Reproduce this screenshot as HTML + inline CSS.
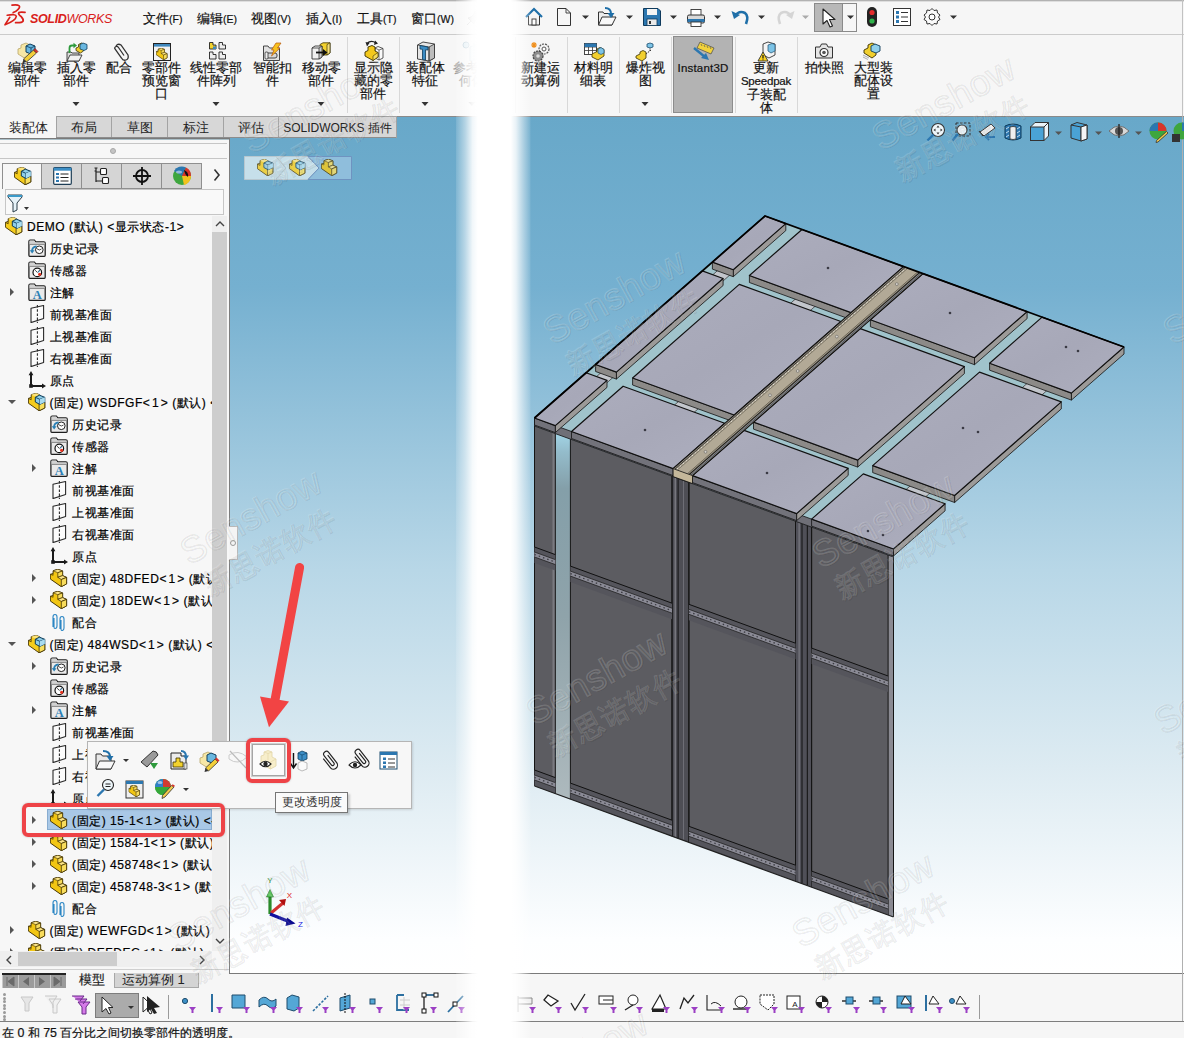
<!DOCTYPE html><html><head><meta charset="utf-8"><style>
*{margin:0;padding:0;box-sizing:border-box}
html,body{width:1184px;height:1038px;overflow:hidden;background:#f6f6f6;font-family:"Liberation Sans",sans-serif;color:#1a1a1a}
.a{position:absolute}
.t{position:absolute;white-space:nowrap;font-size:12px;line-height:14px;-webkit-text-stroke:0.2px currentColor}
.rb{position:absolute;white-space:nowrap;font-size:13px;line-height:13px;text-align:center;width:80px;color:#111;-webkit-text-stroke:0.2px currentColor}
svg{position:absolute;overflow:visible}
.tab{position:absolute;top:116px;height:22px;white-space:nowrap;background:#d7d7d7;border:1px solid #a3a3a3;border-bottom:none;font-size:13px;line-height:21px;text-align:center;color:#222}
</style></head><body>
<svg width="0" height="0" style="position:absolute"><defs>
<symbol id="asm" viewBox="0 0 18 18">
<path d="M0.4 5.4 L3.2 4.4 L3.2 1.7 L8.1 0.3 L11.8 1.9 L11.8 9 L16.8 9 L16.8 15 L11.1 17.8 L0.4 10.2Z" fill="#f5cc1c" stroke="#3d2e00" stroke-width="0.9" stroke-linejoin="round"/>
<path d="M3.2 1.7 L8.1 0.3 L11.8 1.9 L7 3.4Z" fill="#fbe27a"/>
<path d="M11.1 11 L16.8 9 L16.8 15 L11.1 17.8Z" fill="#f9df5c" stroke="#3d2e00" stroke-width="0.8"/>
<path d="M0.4 5.4 L3.2 6.8 L3.2 4.4" fill="none" stroke="#3d2e00" stroke-width="0.7"/>
<path d="M7.3 4.3 L11.4 2.2 L16.8 4.3 L16.8 9 L11.8 11.4 L7.3 9Z" fill="#8fcfea" stroke="#0b3a58" stroke-width="1"/>
<path d="M7.3 4.3 L11.8 6.3 L16.8 4.3 M11.8 6.3 L11.8 11.4" fill="none" stroke="#0b3a58" stroke-width="0.9"/>
<path d="M11.8 6.3 L16.8 4.3 L16.8 9 L11.8 11.4Z" fill="#a9dcf0"/>
</symbol>
<symbol id="part" viewBox="0 0 18 18">
<path d="M0.3 5.3 L3.1 4.6 L3.1 1.8 L7.9 0.2 L12.6 2 L12.6 6.6 L16.6 8.4 L16.6 14.9 L11.3 17.7 L0.3 10Z" fill="#f2c613" stroke="#3d2e00" stroke-width="0.95" stroke-linejoin="round"/>
<path d="M3.1 1.8 L7.9 0.2 L12.6 2 L7.8 3.7Z" fill="#fbe487" stroke="#3d2e00" stroke-width="0.6"/>
<path d="M7.8 3.7 L12.6 2 L12.6 6.6 L7.8 8.3Z" fill="#f8dc5c" stroke="#3d2e00" stroke-width="0.7"/>
<path d="M7.8 8.3 L12.6 6.6 L16.6 8.4 L11.3 10.5Z" fill="#fbe487" stroke="#3d2e00" stroke-width="0.7"/>
<path d="M11.3 10.5 L16.6 8.4 L16.6 14.9 L11.3 17.7Z" fill="#f8dc5c" stroke="#3d2e00" stroke-width="0.8"/>
<path d="M0.3 5.3 L3.1 6.3 L3.1 4.6" fill="none" stroke="#3d2e00" stroke-width="0.6"/>
</symbol>
<symbol id="fold" viewBox="0 0 18 18">
<path d="M0.9 2.4 Q0.9 1 2.2 1 L6.4 1 L7.8 2.8 L15.9 2.8 Q17.2 2.8 17.2 4.1 L17.2 16.2 Q17.2 17.4 15.9 17.4 L2.2 17.4 Q0.9 17.4 0.9 16.2Z" fill="#eaeaea" stroke="#1e1e1e" stroke-width="1.25"/>
<path d="M1.5 1.6 L6.2 1.6 L7.5 3.4 L16.6 3.4 L16.6 5.2 L1.5 5.2Z" fill="#d2d2d2"/>
<path d="M1.5 5.4 L16.6 5.4" stroke="#7a7a7a" stroke-width="0.9"/>
</symbol>
<symbol id="hist" viewBox="0 0 18 18"><use href="#fold"/>
<circle cx="11.3" cy="10.8" r="3.8" fill="#fff" stroke="#222" stroke-width="1"/><path d="M8.5 9.5 L11.3 11 L13.5 10" stroke="#222" stroke-width="0.8" fill="none"/>
<path d="M4 12.5 Q4 7.8 8.6 7.4" stroke="#2a80b5" stroke-width="1.8" fill="none"/><path d="M1.8 11.3 L4.1 14.6 L6.6 11.3Z" fill="#2a80b5"/>
</symbol>
<symbol id="sens" viewBox="0 0 18 18"><use href="#fold"/>
<circle cx="9.3" cy="11.4" r="4.3" fill="#fff" stroke="#111" stroke-width="1.2"/><path d="M7.2 9.3 L9.3 11.4 M12 8.8 L9.6 11.2" stroke="#222" stroke-width="0.9"/><path d="M12.2 9.4 L10 11.3" stroke="#2a80b5" stroke-width="1"/><circle cx="11.6" cy="13.3" r="1.6" fill="#e8321e"/>
</symbol>
<symbol id="annot" viewBox="0 0 18 18"><use href="#fold"/>
<text x="9.2" y="16.3" font-family="Liberation Serif" font-weight="bold" font-size="12.5" fill="#2a7fb5" text-anchor="middle">A</text>
</symbol>
<symbol id="plane" viewBox="0 0 18 18">
<path d="M3 3.3 L15.6 0.5 L15.6 13.6 L3 17.6 Z" fill="#fbfbfb" stroke="#2a2a2a" stroke-width="1.1" stroke-linejoin="round"/>
<path d="M9.4 0 L9.4 18" stroke="#2a2a2a" stroke-width="1.1" stroke-dasharray="2.6 1.6"/>
</symbol>
<symbol id="origin" viewBox="0 0 18 18">
<path d="M3 3 L3 15 L15 15" stroke="#1a1a1a" stroke-width="2" fill="none"/><path d="M0.6 4.2 L3 0 L5.4 4.2Z M14 12.4 L18 15 L14 17.6Z" fill="#1a1a1a"/><rect x="1.2" y="13.2" width="3.6" height="3.6" fill="#1a1a1a"/>
</symbol>
<symbol id="mate" viewBox="0 0 18 18">
<path d="M3 14 L3 4 Q3 1.5 5 1.5 Q7 1.5 7 4 L7 13 Q7 15.5 5 15.5 Q4 15.5 4 14 L4 5" fill="none" stroke="#2b86c4" stroke-width="1.1"/>
<path d="M10 16 L10 6 Q10 3.5 12 3.5 Q14 3.5 14 6 L14 15 Q14 17.5 12 17.5 Q11 17.5 11 16 L11 7" fill="none" stroke="#2b86c4" stroke-width="1.1"/>
</symbol>
<symbol id="tri_r" viewBox="0 0 8 8"><path d="M2 0 L6 4 L2 8Z" fill="#555"/></symbol>
<symbol id="tri_d" viewBox="0 0 8 8"><path d="M0 2 L8 2 L4 6Z" fill="#555"/></symbol>
<symbol id="dd" viewBox="0 0 8 8"><path d="M0.5 2.5 L7.5 2.5 L4 6Z" fill="#333"/></symbol>
</defs></svg>
<div class="a" style="left:0;top:0;width:1184px;height:1px;background:#b2b2b2"></div><div class="a" style="left:0;top:1px;width:1184px;height:1px;background:#dedede"></div>
<div class="a" style="left:0;top:34px;width:1184px;height:1px;background:#cbcbcb"></div>
<div class="a" style="left:1182px;top:0;width:1px;height:116px;background:#c2c2c2"></div>
<div class="a" style="left:229px;top:116px;width:955px;height:857px;background:linear-gradient(#68a8c9 0%,#75b0d0 20%,#b8d7e7 53%,#ddebf2 76%,#fdfeff 96%,#ffffff 100%)"></div>
<div class="a" style="left:229px;top:116px;width:1px;height:857px;background:#7d7d7d"></div>
<div class="a" style="left:229px;top:116px;width:955px;height:1px;background:#8a8a8a"></div>
<div class="a" style="left:229px;top:973px;width:955px;height:1px;background:#7a7a7a"></div>
<div class="a" style="left:0;top:1021px;width:1184px;height:1px;background:#7e7e7e"></div>
<div class="a" style="left:1182px;top:116px;width:1px;height:905px;background:#b0b0b0"></div>
<div class="a" style="left:0;top:138px;width:229px;height:835px;background:#f7f7f7;border-top:1px solid #7a7a7a"></div><div class="a" style="left:0;top:139px;width:229px;height:1px;background:#a9bec6"></div>
<div class="a" style="left:0;top:143px;width:227px;height:1px;background:#c6c6c6"></div>
<div class="a" style="left:0;top:158px;width:227px;height:1px;background:#c6c6c6"></div>
<div class="a" style="left:110px;top:148px;width:6px;height:6px;border-radius:3px;background:#c4c4c4;border:1px solid #a8a8a8"></div>
<div class="a" style="left:41px;top:163px;width:41px;height:26px;background:#d5d5d5;border:1px solid #8f8f8f"></div>
<div class="a" style="left:81px;top:163px;width:41px;height:26px;background:#d5d5d5;border:1px solid #8f8f8f"></div>
<div class="a" style="left:121px;top:163px;width:41px;height:26px;background:#d5d5d5;border:1px solid #8f8f8f"></div>
<div class="a" style="left:161px;top:163px;width:41px;height:26px;background:#d5d5d5;border:1px solid #8f8f8f"></div>
<div class="a" style="left:2px;top:163px;width:40px;height:26px;border-top:1px solid #8f8f8f;border-left:1px solid #8f8f8f"></div>
<div class="a" style="left:5px;top:189px;width:219px;height:26px;background:#f9f9f9;border:1px solid #c6c6c6"></div>
<svg class="a" style="left:14px;top:167px" width="18" height="18" viewBox="0 0 18 18" ><use href="#asm" width="18" height="18"/></svg>
<svg class="a" style="left:53px;top:167px" width="19" height="18" viewBox="0 0 19 18"><rect x="0.7" y="0.7" width="17.6" height="16.6" rx="1" fill="#fff" stroke="#1d3d55" stroke-width="1.2"/><rect x="0.7" y="0.7" width="17.6" height="3" fill="#3d8fc6"/>
<rect x="3" y="6" width="3" height="2" fill="#2c77b0"/><rect x="3" y="9.5" width="3" height="2" fill="#2c77b0"/><rect x="3" y="13" width="3" height="2" fill="#2c77b0"/><path d="M7.5 7 L15.5 7 M7.5 10.5 L15.5 10.5 M7.5 14 L15.5 14" stroke="#222" stroke-width="1"/></svg>
<svg class="a" style="left:94px;top:167px" width="16" height="18" viewBox="0 0 16 18"><path d="M2 1 L2 15 M2 5 L7 5 M2 14 L9 14" stroke="#222" stroke-width="1.2" fill="none"/><rect x="6.5" y="1.5" width="6" height="6" rx="1" fill="#fff" stroke="#222" stroke-width="1.1"/><rect x="8.5" y="10.5" width="6" height="6" rx="1" fill="#fff" stroke="#222" stroke-width="1.1"/><path d="M0.5 1 L3.5 1 M0.5 4 L2 4" stroke="#222"/></svg>
<svg class="a" style="left:132px;top:166px" width="20" height="20" viewBox="0 0 20 20"><circle cx="10" cy="10" r="6" fill="none" stroke="#111" stroke-width="1.8"/><path d="M10 1 L10 19 M1 10 L19 10" stroke="#111" stroke-width="1.8"/></svg>
<svg class="a" style="left:172px;top:166px" width="20" height="20" viewBox="0 0 20 20"><circle cx="10" cy="10" r="9" fill="#3ea63e"/><path d="M10 10 L2 5 A9 9 0 0 1 14 1.5Z" fill="#2c77b0"/><path d="M10 10 L14 1.5 A9 9 0 0 1 19 10Z" fill="#d9342b"/><path d="M10 10 L19 10 A9 9 0 0 1 12 19Z" fill="#f2c21c"/><path d="M12 4 Q17 6 16 11 Q13 9 12 4Z" fill="#111"/><ellipse cx="7" cy="6" rx="3" ry="1.6" fill="#fff" opacity="0.5"/></svg>
<svg class="a" style="left:213px;top:168px" width="8" height="14"><path d="M1.5 1.5 L6 7 L1.5 12.5" stroke="#333" stroke-width="1.6" fill="none"/></svg>
<svg class="a" style="left:7px;top:193px" width="26" height="20"><path d="M1 2 L15 2 L15 4 L10 10 L10 17 L6 19 L6 10 L1 4Z" fill="#e6f2f8" stroke="#2c3e4a" stroke-width="1"/><path d="M1 2 L15 2 L15 4 L1 4Z" fill="#3b9ac9"/><path d="M17 14 L22 14 L19.5 17Z" fill="#333"/></svg>
<div class="a" style="left:212px;top:216px;width:15px;height:735px;background:#efefef"></div>
<div class="a" style="left:212px;top:232px;width:15px;height:543px;background:#cdcdcd"></div>
<svg class="a" style="left:215px;top:220px" width="10" height="7"><path d="M1 6 L5 2 L9 6" stroke="#444" stroke-width="1.4" fill="none"/></svg>
<svg class="a" style="left:215px;top:938px" width="10" height="7"><path d="M1 1 L5 5 L9 1" stroke="#444" stroke-width="1.4" fill="none"/></svg>
<div class="a" style="left:0;top:951px;width:212px;height:16px;background:#efefef"></div>
<div class="a" style="left:18px;top:952px;width:99px;height:14px;background:#cdcdcd"></div>
<svg class="a" style="left:5px;top:955px" width="7" height="10"><path d="M6 1 L2 5 L6 9" stroke="#444" stroke-width="1.4" fill="none"/></svg>
<svg class="a" style="left:199px;top:955px" width="7" height="10"><path d="M1 1 L5 5 L1 9" stroke="#444" stroke-width="1.4" fill="none"/></svg>
<div class="a" style="left:0;top:969px;width:229px;height:1px;background:#cfcfcf"></div>
<div class="a" style="left:0;top:216px;width:212px;height:735px;overflow:hidden">
<svg class="a" style="left:5.0px;top:1px" width="18" height="18" viewBox="0 0 18 18" ><use href="#asm" width="18" height="18"/></svg>
<div class="t" style="left:27.0px;top:4px;letter-spacing:0.55px;color:#000">DEMO (默认) &lt;显示状态-1&gt;</div>
<svg class="a" style="left:27.5px;top:23px" width="18" height="18" viewBox="0 0 18 18" ><use href="#hist" width="18" height="18"/></svg>
<div class="t" style="left:49.5px;top:26px;letter-spacing:0.55px;color:#000">历史记录</div>
<svg class="a" style="left:27.5px;top:45px" width="18" height="18" viewBox="0 0 18 18" ><use href="#sens" width="18" height="18"/></svg>
<div class="t" style="left:49.5px;top:48px;letter-spacing:0.55px;color:#000">传感器</div>
<svg class="a" style="left:7.5px;top:72px" width="8" height="8" viewBox="0 0 8 8" ><use href="#tri_r" width="8" height="8"/></svg>
<svg class="a" style="left:27.5px;top:67px" width="18" height="18" viewBox="0 0 18 18" ><use href="#annot" width="18" height="18"/></svg>
<div class="t" style="left:49.5px;top:70px;letter-spacing:0.55px;color:#000">注解</div>
<svg class="a" style="left:27.5px;top:89px" width="18" height="18" viewBox="0 0 18 18" ><use href="#plane" width="18" height="18"/></svg>
<div class="t" style="left:49.5px;top:92px;letter-spacing:0.55px;color:#000">前视基准面</div>
<svg class="a" style="left:27.5px;top:111px" width="18" height="18" viewBox="0 0 18 18" ><use href="#plane" width="18" height="18"/></svg>
<div class="t" style="left:49.5px;top:114px;letter-spacing:0.55px;color:#000">上视基准面</div>
<svg class="a" style="left:27.5px;top:133px" width="18" height="18" viewBox="0 0 18 18" ><use href="#plane" width="18" height="18"/></svg>
<div class="t" style="left:49.5px;top:136px;letter-spacing:0.55px;color:#000">右视基准面</div>
<svg class="a" style="left:27.5px;top:155px" width="18" height="18" viewBox="0 0 18 18" ><use href="#origin" width="18" height="18"/></svg>
<div class="t" style="left:49.5px;top:158px;letter-spacing:0.55px;color:#000">原点</div>
<svg class="a" style="left:7.5px;top:182px" width="8" height="8" viewBox="0 0 8 8" ><use href="#tri_d" width="8" height="8"/></svg>
<svg class="a" style="left:27.5px;top:177px" width="18" height="18" viewBox="0 0 18 18" ><use href="#asm" width="18" height="18"/></svg>
<div class="t" style="left:49.5px;top:180px;letter-spacing:0.55px;color:#000">(固定) WSDFGF&lt;&#8202;1&#8202;&gt; (默认) &lt;显</div>
<svg class="a" style="left:50.0px;top:199px" width="18" height="18" viewBox="0 0 18 18" ><use href="#hist" width="18" height="18"/></svg>
<div class="t" style="left:72.0px;top:202px;letter-spacing:0.55px;color:#000">历史记录</div>
<svg class="a" style="left:50.0px;top:221px" width="18" height="18" viewBox="0 0 18 18" ><use href="#sens" width="18" height="18"/></svg>
<div class="t" style="left:72.0px;top:224px;letter-spacing:0.55px;color:#000">传感器</div>
<svg class="a" style="left:30.0px;top:248px" width="8" height="8" viewBox="0 0 8 8" ><use href="#tri_r" width="8" height="8"/></svg>
<svg class="a" style="left:50.0px;top:243px" width="18" height="18" viewBox="0 0 18 18" ><use href="#annot" width="18" height="18"/></svg>
<div class="t" style="left:72.0px;top:246px;letter-spacing:0.55px;color:#000">注解</div>
<svg class="a" style="left:50.0px;top:265px" width="18" height="18" viewBox="0 0 18 18" ><use href="#plane" width="18" height="18"/></svg>
<div class="t" style="left:72.0px;top:268px;letter-spacing:0.55px;color:#000">前视基准面</div>
<svg class="a" style="left:50.0px;top:287px" width="18" height="18" viewBox="0 0 18 18" ><use href="#plane" width="18" height="18"/></svg>
<div class="t" style="left:72.0px;top:290px;letter-spacing:0.55px;color:#000">上视基准面</div>
<svg class="a" style="left:50.0px;top:309px" width="18" height="18" viewBox="0 0 18 18" ><use href="#plane" width="18" height="18"/></svg>
<div class="t" style="left:72.0px;top:312px;letter-spacing:0.55px;color:#000">右视基准面</div>
<svg class="a" style="left:50.0px;top:331px" width="18" height="18" viewBox="0 0 18 18" ><use href="#origin" width="18" height="18"/></svg>
<div class="t" style="left:72.0px;top:334px;letter-spacing:0.55px;color:#000">原点</div>
<svg class="a" style="left:30.0px;top:358px" width="8" height="8" viewBox="0 0 8 8" ><use href="#tri_r" width="8" height="8"/></svg>
<svg class="a" style="left:50.0px;top:353px" width="18" height="18" viewBox="0 0 18 18" ><use href="#part" width="18" height="18"/></svg>
<div class="t" style="left:72.0px;top:356px;letter-spacing:0.55px;color:#000">(固定) 48DFED&lt;&#8202;1&#8202;&gt; (默认)</div>
<svg class="a" style="left:30.0px;top:380px" width="8" height="8" viewBox="0 0 8 8" ><use href="#tri_r" width="8" height="8"/></svg>
<svg class="a" style="left:50.0px;top:375px" width="18" height="18" viewBox="0 0 18 18" ><use href="#part" width="18" height="18"/></svg>
<div class="t" style="left:72.0px;top:378px;letter-spacing:0.55px;color:#000">(固定) 18DEW&lt;&#8202;1&#8202;&gt; (默认)</div>
<svg class="a" style="left:50.0px;top:397px" width="18" height="18" viewBox="0 0 18 18" ><use href="#mate" width="18" height="18"/></svg>
<div class="t" style="left:72.0px;top:400px;letter-spacing:0.55px;color:#000">配合</div>
<svg class="a" style="left:7.5px;top:424px" width="8" height="8" viewBox="0 0 8 8" ><use href="#tri_d" width="8" height="8"/></svg>
<svg class="a" style="left:27.5px;top:419px" width="18" height="18" viewBox="0 0 18 18" ><use href="#asm" width="18" height="18"/></svg>
<div class="t" style="left:49.5px;top:422px;letter-spacing:0.55px;color:#000">(固定) 484WSD&lt;&#8202;1&#8202;&gt; (默认) &lt;显</div>
<svg class="a" style="left:30.0px;top:446px" width="8" height="8" viewBox="0 0 8 8" ><use href="#tri_r" width="8" height="8"/></svg>
<svg class="a" style="left:50.0px;top:441px" width="18" height="18" viewBox="0 0 18 18" ><use href="#hist" width="18" height="18"/></svg>
<div class="t" style="left:72.0px;top:444px;letter-spacing:0.55px;color:#000">历史记录</div>
<svg class="a" style="left:50.0px;top:463px" width="18" height="18" viewBox="0 0 18 18" ><use href="#sens" width="18" height="18"/></svg>
<div class="t" style="left:72.0px;top:466px;letter-spacing:0.55px;color:#000">传感器</div>
<svg class="a" style="left:30.0px;top:490px" width="8" height="8" viewBox="0 0 8 8" ><use href="#tri_r" width="8" height="8"/></svg>
<svg class="a" style="left:50.0px;top:485px" width="18" height="18" viewBox="0 0 18 18" ><use href="#annot" width="18" height="18"/></svg>
<div class="t" style="left:72.0px;top:488px;letter-spacing:0.55px;color:#000">注解</div>
<svg class="a" style="left:50.0px;top:507px" width="18" height="18" viewBox="0 0 18 18" ><use href="#plane" width="18" height="18"/></svg>
<div class="t" style="left:72.0px;top:510px;letter-spacing:0.55px;color:#000">前视基准面</div>
<svg class="a" style="left:50.0px;top:529px" width="18" height="18" viewBox="0 0 18 18" ><use href="#plane" width="18" height="18"/></svg>
<div class="t" style="left:72.0px;top:532px;letter-spacing:0.55px;color:#000">上视基准面</div>
<svg class="a" style="left:50.0px;top:551px" width="18" height="18" viewBox="0 0 18 18" ><use href="#plane" width="18" height="18"/></svg>
<div class="t" style="left:72.0px;top:554px;letter-spacing:0.55px;color:#000">右视基准面</div>
<svg class="a" style="left:50.0px;top:573px" width="18" height="18" viewBox="0 0 18 18" ><use href="#origin" width="18" height="18"/></svg>
<div class="t" style="left:72.0px;top:576px;letter-spacing:0.55px;color:#000">原点</div>
<div class="a" style="left:47px;top:593px;width:165px;height:21px;background:#a9c8e6;border:1px solid #88acd0"></div>
<svg class="a" style="left:30.0px;top:600px" width="8" height="8" viewBox="0 0 8 8" ><use href="#tri_r" width="8" height="8"/></svg>
<svg class="a" style="left:50.0px;top:595px" width="18" height="18" viewBox="0 0 18 18" ><use href="#part" width="18" height="18"/></svg>
<div class="t" style="left:72.0px;top:598px;letter-spacing:0.55px;color:#000">(固定) 15-1&lt;&#8202;1&#8202;&gt; (默认) &lt;-</div>
<svg class="a" style="left:30.0px;top:622px" width="8" height="8" viewBox="0 0 8 8" ><use href="#tri_r" width="8" height="8"/></svg>
<svg class="a" style="left:50.0px;top:617px" width="18" height="18" viewBox="0 0 18 18" ><use href="#part" width="18" height="18"/></svg>
<div class="t" style="left:72.0px;top:620px;letter-spacing:0.55px;color:#000">(固定) 1584-1&lt;&#8202;1&#8202;&gt; (默认)</div>
<svg class="a" style="left:30.0px;top:644px" width="8" height="8" viewBox="0 0 8 8" ><use href="#tri_r" width="8" height="8"/></svg>
<svg class="a" style="left:50.0px;top:639px" width="18" height="18" viewBox="0 0 18 18" ><use href="#part" width="18" height="18"/></svg>
<div class="t" style="left:72.0px;top:642px;letter-spacing:0.55px;color:#000">(固定) 458748&lt;&#8202;1&#8202;&gt; (默认)</div>
<svg class="a" style="left:30.0px;top:666px" width="8" height="8" viewBox="0 0 8 8" ><use href="#tri_r" width="8" height="8"/></svg>
<svg class="a" style="left:50.0px;top:661px" width="18" height="18" viewBox="0 0 18 18" ><use href="#part" width="18" height="18"/></svg>
<div class="t" style="left:72.0px;top:664px;letter-spacing:0.55px;color:#000">(固定) 458748-3&lt;&#8202;1&#8202;&gt; (默认)</div>
<svg class="a" style="left:50.0px;top:683px" width="18" height="18" viewBox="0 0 18 18" ><use href="#mate" width="18" height="18"/></svg>
<div class="t" style="left:72.0px;top:686px;letter-spacing:0.55px;color:#000">配合</div>
<svg class="a" style="left:7.5px;top:710px" width="8" height="8" viewBox="0 0 8 8" ><use href="#tri_r" width="8" height="8"/></svg>
<svg class="a" style="left:27.5px;top:705px" width="18" height="18" viewBox="0 0 18 18" ><use href="#part" width="18" height="18"/></svg>
<div class="t" style="left:49.5px;top:708px;letter-spacing:0.55px;color:#000">(固定) WEWFGD&lt;&#8202;1&#8202;&gt; (默认) &lt;</div>
<svg class="a" style="left:7.5px;top:732px" width="8" height="8" viewBox="0 0 8 8" ><use href="#tri_r" width="8" height="8"/></svg>
<svg class="a" style="left:27.5px;top:727px" width="18" height="18" viewBox="0 0 18 18" ><use href="#part" width="18" height="18"/></svg>
<div class="t" style="left:49.5px;top:730px;letter-spacing:0.55px;color:#000">(固定) DEFDEG&lt;&#8202;1&#8202;&gt; (默认)</div>
</div>
<svg class="a" style="left:0;top:0" width="30" height="30" viewBox="0 0 30 30">
<path d="M12 5.2 Q19.5 4.3 19.6 6.8 Q19 9.8 13.2 12.6" stroke="#d9201a" stroke-width="1.7" fill="none" stroke-linecap="round"/>
<path d="M7.2 15.3 Q16 13.6 16.3 16.4 Q15.8 20.6 5 24.8 L9.8 17.3" stroke="#d9201a" stroke-width="1.6" fill="none" stroke-linejoin="round" stroke-linecap="round"/>
<path d="M25 12.4 Q20.5 11.6 18.9 12.6 Q17.6 14 21.4 16.8 Q23.8 19.2 23 21.3 Q22 22.9 15.6 22.7" stroke="#d9201a" stroke-width="1.8" fill="none" stroke-linecap="round"/>
</svg>
<div class="a" style="left:30px;top:12px;font-size:12.5px;line-height:14px;font-style:italic;color:#d9201a;letter-spacing:-0.35px;white-space:nowrap"><b style="font-weight:bold">SOLID</b><span style="font-weight:normal">WORKS</span></div>
<div class="t" style="left:143px;top:12px;font-size:12.5px;line-height:14px;color:#111">文件<span style="font-size:10.5px">(F)</span></div>
<div class="t" style="left:197px;top:12px;font-size:12.5px;line-height:14px;color:#111">编辑<span style="font-size:10.5px">(E)</span></div>
<div class="t" style="left:251px;top:12px;font-size:12.5px;line-height:14px;color:#111">视图<span style="font-size:10.5px">(V)</span></div>
<div class="t" style="left:306px;top:12px;font-size:12.5px;line-height:14px;color:#111">插入<span style="font-size:10.5px">(I)</span></div>
<div class="t" style="left:357px;top:12px;font-size:12.5px;line-height:14px;color:#111">工具<span style="font-size:10.5px">(T)</span></div>
<div class="t" style="left:411px;top:12px;font-size:12.5px;line-height:14px;color:#111">窗口<span style="font-size:10.5px">(W)</span></div>
<svg class="a" style="left:466px;top:10px" width="16" height="16"><path d="M9 1 L15 7 L12 8 L9 11 L8 14 L2 8 L5 7 L8 4Z M5 11 L1 15" fill="#ddd" stroke="#d0d0d0" stroke-width="1"/></svg>
<div class="rb" style="left:-13px;top:61px;color:#111"><div>编辑零</div><div>部件</div></div>
<div class="rb" style="left:36px;top:61px;color:#111"><div>插入零</div><div>部件</div></div>
<svg class="a" style="left:72px;top:101px" width="8" height="6"><path d="M0.5 1 L7.5 1 L4 5Z" fill="#333"/></svg>
<div class="rb" style="left:79px;top:61px;color:#111"><div>配合</div></div>
<div class="rb" style="left:121px;top:61px;color:#111"><div>零部件</div><div>预览窗</div><div>口</div></div>
<div class="rb" style="left:176px;top:61px;color:#111"><div>线性零部</div><div>件阵列</div></div>
<svg class="a" style="left:212px;top:101px" width="8" height="6"><path d="M0.5 1 L7.5 1 L4 5Z" fill="#333"/></svg>
<div class="rb" style="left:232px;top:61px;color:#111"><div>智能扣</div><div>件</div></div>
<div class="rb" style="left:281px;top:61px;color:#111"><div>移动零</div><div>部件</div></div>
<svg class="a" style="left:317px;top:101px" width="8" height="6"><path d="M0.5 1 L7.5 1 L4 5Z" fill="#333"/></svg>
<div class="rb" style="left:333px;top:61px;color:#111"><div>显示隐</div><div>藏的零</div><div>部件</div></div>
<div class="rb" style="left:385px;top:61px;color:#111"><div>装配体</div><div>特征</div></div>
<svg class="a" style="left:421px;top:101px" width="8" height="6"><path d="M0.5 1 L7.5 1 L4 5Z" fill="#333"/></svg>
<div class="rb" style="left:432px;top:61px;color:#9a9a9a"><div>参考几</div><div>何体</div></div>
<svg class="a" style="left:468px;top:101px" width="8" height="6"><path d="M0.5 1 L7.5 1 L4 5Z" fill="#bbb"/></svg>
<div class="a" style="left:347px;top:37px;width:1px;height:76px;background:#d8d8d8"></div>
<div class="a" style="left:399px;top:37px;width:1px;height:76px;background:#d8d8d8"></div>

<svg class="a" style="left:17px;top:41px" width="22" height="22" viewBox="0 0 22 22">
<path d="M1 8 L4 7 L4 4 L9 2 L13 4 L13 15 L9 18 L1 13Z" fill="#f6e7a6" stroke="#b9a66a" stroke-width="0.8"/>
<path d="M9 5 L13 3 L18 5 L18 11 L14 13 L9 11Z" fill="#69b7e0" stroke="#0e3d5e" stroke-width="1"/><path d="M9 5 L14 7 L18 5 M14 7 L14 13" fill="none" stroke="#0e3d5e" stroke-width="0.8"/>
<path d="M16.5 9 L19.5 12 L9.5 21 L6.5 18Z" fill="#f3cf3a" stroke="#333" stroke-width="0.8"/><path d="M16.5 9 L19.5 12 L21 10.5 L18 7.5Z" fill="#d9342b" stroke="#6a1a1a" stroke-width="0.6"/><path d="M6.5 18 L9.5 21 L5.5 22Z" fill="#333"/></svg>
<svg class="a" style="left:66px;top:42px" width="22" height="20" viewBox="0 0 22 20">
<path d="M1 10 L5 10 L6 11 L13 11 L13 19 L1 19Z" fill="#dcdcdc" stroke="#333" stroke-width="0.9"/><path d="M1 19 L4 13 L16 13 L13 19Z" fill="#f2f2f2" stroke="#333" stroke-width="0.9"/>
<path d="M3.5 11 L3.5 6 Q3.5 3.5 6 3.5 L8 3.5" stroke="#2e9a3c" stroke-width="1.8" fill="none"/><path d="M7.5 0.8 L11 3.5 L7.5 6.2Z" fill="#2e9a3c"/>
<path d="M10 6 L12.5 5 L12.5 2.5 L15.5 1 L17.5 2 L17.5 9 L14.5 11 L10 8.5Z" fill="#f1cf2e" stroke="#3a3000" stroke-width="0.8"/><path d="M14 2.5 L17 1 L21 2.5 L21 7 L18 8.5 L14 7Z" fill="#69b7e0" stroke="#0e3d5e" stroke-width="0.8"/></svg>
<svg class="a" style="left:110px;top:42px" width="20" height="20" viewBox="0 0 20 20">
<path d="M6 4 Q8 1 11 3 L18 13 Q19 17 16 18 Q13 19 11.5 16 L5 7 Q4 5.5 6 4.5 Q7.5 4 8.5 5.5 L14 13.5" fill="none" stroke="#333" stroke-width="1.3"/></svg>
<svg class="a" style="left:152px;top:42px" width="20" height="20" viewBox="0 0 20 20">
<rect x="1.5" y="1.5" width="17" height="17" fill="#f2f2f2" stroke="#222" stroke-width="1"/><rect x="2" y="2" width="16" height="2.6" fill="#3f88bd"/>
<use href="#part" x="4" y="6" width="12" height="12"/></svg>
<svg class="a" style="left:208px;top:41px" width="20" height="20" viewBox="0 0 20 20">
<path d="M1.5 1.5 L5 1.5 L5 4 L8 4 L8 8 L1.5 8Z" fill="#f3d22e" stroke="#222" stroke-width="0.9"/><rect x="5" y="5.5" width="3" height="2.5" fill="#3f88bd"/>
<path d="M11 1.5 L14.5 1.5 L14.5 4 L17.5 4 L17.5 8 L11 8Z M1.5 11 L5 11 L5 13.5 L8 13.5 L8 18 L1.5 18Z M11 11 L14.5 11 L14.5 13.5 L17.5 13.5 L17.5 18 L11 18Z" fill="#eee" stroke="#222" stroke-width="0.9"/></svg>
<svg class="a" style="left:262px;top:42px" width="20" height="20" viewBox="0 0 20 20">
<path d="M1.5 4 L6 4 L7.5 6 L17.5 6 L17.5 18.5 L1.5 18.5Z" fill="#e2e2e2" stroke="#333" stroke-width="0.9"/>
<rect x="4" y="11" width="11" height="5" rx="2" fill="#d8d8d8" stroke="#333" stroke-width="0.9"/><rect x="3" y="10" width="3" height="7" rx="1" fill="#eee" stroke="#333" stroke-width="0.8"/>
<path d="M14 1 L19 1 L15.5 6 L18 6 L9.5 14 L12 8 L9.5 8Z" fill="#f7c21f" stroke="#b8560a" stroke-width="0.7"/></svg>
<svg class="a" style="left:311px;top:42px" width="20" height="18" viewBox="0 0 20 18">
<path d="M9 2.5 L12 0.8 L19 0.8 L19 11 L16 13 L9 13Z" fill="#f3d22e" stroke="#3a3000" stroke-width="0.8"/><path d="M16 2.6 L19 0.8 L19 11 L16 13Z" fill="#f9e27a" stroke="#3a3000" stroke-width="0.7"/>
<path d="M1 6 L4 4 L11 4 L11 15 L8 17 L1 17Z" fill="#f0f0f0" stroke="#333" stroke-width="0.9"/><path d="M8 6 L11 4 L11 15 L8 17Z" fill="#cfcfcf" stroke="#333" stroke-width="0.8"/><path d="M1 6 L8 6" stroke="#333" stroke-width="0.8"/>
<path d="M5 10.5 L14 10.5" stroke="#111" stroke-width="1.8"/><path d="M12 7 L16.5 10.5 L12 14Z" fill="#111"/></svg>
<svg class="a" style="left:364px;top:40px" width="20" height="22" viewBox="0 0 20 22">
<path d="M3 3.5 Q7 -0.5 12 3" stroke="#222" stroke-width="1.4" fill="none"/><path d="M11 0.5 L14 3.6 L10 5Z M1.5 2 L3 6.5 L5.5 3Z" fill="#222"/>
<path d="M11 8 L14 6.5 L19 8.5 L19 18 L15 20 L11 18Z" fill="#fafafa" stroke="#333" stroke-width="0.8"/><path d="M15 10 L19 8.5 M15 10 L15 20 M11 8 L15 10" stroke="#333" stroke-width="0.7" fill="none"/>
<path d="M1 12 L4 10.5 L4 7 L8 5.5 L11 7 L11 11 L14 12.5 L14 17 L9 20.5 L1 16Z" fill="#f3c81c" stroke="#3a3000" stroke-width="0.9"/><path d="M9 16 L14 12.5 L14 17 L9 20.5Z" fill="#f7dc5a" stroke="#3a3000" stroke-width="0.6"/></svg>
<svg class="a" style="left:416px;top:41px" width="20" height="21" viewBox="0 0 20 21">
<path d="M1.5 4 L7 1 L18.5 3 L18.5 17 L13 20 L1.5 18Z" fill="#e6e6e6" stroke="#333" stroke-width="0.9"/><path d="M13 6 L18.5 3 L18.5 17 L13 20Z" fill="#bdbdbd" stroke="#333" stroke-width="0.8"/><path d="M1.5 4 L13 6 L13 20" fill="none" stroke="#333" stroke-width="0.8"/>
<path d="M4 4.5 L12 6 L12 9 L9.5 8.8 L9.5 19 L6.5 18.6 L6.5 8.3 L4 8Z" fill="#3b8cc4" stroke="#0d3b5a" stroke-width="0.8"/></svg>
<svg class="a" style="left:462px;top:41px" width="20" height="20" viewBox="0 0 20 20" opacity="0.4">
<circle cx="4" cy="4" r="3" fill="#bfe0f0" stroke="#5a8aa6" stroke-width="0.9"/><path d="M8 6 L16 3 L16 18 L8 20Z" fill="#d5e9f3" stroke="#8ab" stroke-width="0.8"/><path d="M12 2 L12 20" stroke="#8ab" stroke-dasharray="2 1"/></svg>

<div class="tab" style="left:56px;width:56px">布局</div>
<div class="tab" style="left:111px;width:57px">草图</div>
<div class="tab" style="left:167px;width:57px">标注</div>
<div class="tab" style="left:223px;width:56px">评估</div>
<div class="tab" style="left:278px;width:119px"><span style="font-size:12px">SOLIDWORKS 插件</span></div>
<div class="a" style="left:0;top:117px;width:56px;height:22px;font-size:13.4px;line-height:22px;text-align:center;color:#222">装配体</div>
<div class="a" style="left:56px;top:137px;width:340px;height:1px;background:#8d8d8d"></div>

<svg class="a" style="left:524px;top:7px" width="20" height="20" viewBox="0 0 20 20">
<path d="M2 10 L10 2 L18 10" stroke="#1f6fa8" stroke-width="2.2" fill="none"/><path d="M4.5 9 L4.5 18 L15.5 18 L15.5 9" fill="#f3f3f3" stroke="#333" stroke-width="1"/><rect x="8" y="12" width="4" height="6" fill="#fff" stroke="#333" stroke-width="0.9"/></svg>
<svg class="a" style="left:556px;top:7px" width="16" height="20" viewBox="0 0 16 20">
<path d="M1.5 1.5 L10 1.5 L14.5 6 L14.5 18.5 L1.5 18.5Z" fill="#f6f6f6" stroke="#333" stroke-width="1"/><path d="M10 1.5 L10 6 L14.5 6" fill="none" stroke="#333" stroke-width="0.9"/></svg>
<svg class="a" style="left:597px;top:7px" width="20" height="20" viewBox="0 0 20 20">
<path d="M1.5 5 L6 5 L7 6.5 L15 6.5 L15 18 L1.5 18Z" fill="#ececec" stroke="#333" stroke-width="1"/><path d="M1.5 18 L5 10 L19 10 L15 18Z" fill="#f8f8f8" stroke="#333" stroke-width="1"/>
<path d="M8 1 Q14 1 14 7" stroke="#1f6fa8" stroke-width="2" fill="none"/><path d="M10.5 6 L14 11 L17.5 6Z" fill="#1f6fa8"/></svg>
<svg class="a" style="left:642px;top:7px" width="20" height="20" viewBox="0 0 20 20">
<path d="M1.5 1.5 L16 1.5 L18.5 4 L18.5 18.5 L1.5 18.5Z" fill="#2c77b0" stroke="#0f3a5c" stroke-width="1"/><rect x="5" y="2" width="10" height="6" fill="#f4f4f4"/><rect x="5" y="12" width="10" height="6.5" fill="#e9e9e9" stroke="#0f3a5c" stroke-width="0.8"/><rect x="7" y="14" width="2" height="3" fill="#333"/></svg>
<svg class="a" style="left:686px;top:8px" width="20" height="20" viewBox="0 0 20 20">
<rect x="5" y="1.5" width="10" height="6" fill="#fff" stroke="#333" stroke-width="0.9"/><rect x="1.5" y="7" width="17" height="8" rx="1.5" fill="#d9d9d9" stroke="#333" stroke-width="1"/><rect x="1.5" y="11" width="17" height="3" fill="#2c77b0"/><rect x="5" y="14" width="10" height="4.5" fill="#fff" stroke="#333" stroke-width="0.9"/></svg>
<svg class="a" style="left:731px;top:8px" width="20" height="18" viewBox="0 0 20 18">
<path d="M4 8 Q8 2 14 5 Q18 8 15 16" stroke="#1f6fa8" stroke-width="2.6" fill="none"/><path d="M0.5 3 L3 11 L9 7Z" fill="#1f6fa8"/></svg>
<svg class="a" style="left:775px;top:8px" width="20" height="18" viewBox="0 0 20 18" opacity="0.35">
<path d="M16 8 Q12 2 6 5 Q2 8 5 16" stroke="#9a9a9a" stroke-width="2.6" fill="none"/><path d="M19.5 3 L17 11 L11 7Z" fill="#9a9a9a"/></svg>
<div class="a" style="left:814px;top:3px;width:29px;height:29px;background:#b8b8b8;border:1px solid #8a8a8a"></div>
<div class="a" style="left:843px;top:3px;width:14px;height:29px;background:#f6f6f6;border:1px solid #8a8a8a;border-left:none"></div>
<svg class="a" style="left:821px;top:8px" width="16" height="20" viewBox="0 0 16 20">
<path d="M2 1 L2 16 L6 12.5 L9 19 L11.5 18 L8.5 11.5 L14 11.5Z" fill="#fff" stroke="#222" stroke-width="1.1" stroke-linejoin="round"/></svg>
<svg class="a" style="left:864px;top:6px" width="16" height="22" viewBox="0 0 16 22">
<rect x="3" y="1" width="10" height="20" rx="5" fill="#222"/><circle cx="8" cy="6.5" r="2.6" fill="#e32b2b"/><circle cx="8" cy="15" r="2.6" fill="#2fb34a"/></svg>
<svg class="a" style="left:892px;top:7px" width="20" height="20" viewBox="0 0 20 20">
<rect x="1.5" y="1.5" width="17" height="17" fill="#fff" stroke="#333" stroke-width="1"/><rect x="4" y="4" width="3" height="3" fill="#2c77b0"/><rect x="4" y="8.5" width="3" height="3" fill="#2c77b0"/><rect x="4" y="13" width="3" height="3" fill="#2c77b0"/>
<path d="M9 5.5 L16 5.5 M9 10 L16 10 M9 14.5 L16 14.5" stroke="#333" stroke-width="1.1"/></svg>
<svg class="a" style="left:922px;top:7px" width="20" height="20" viewBox="0 0 20 20">
<path d="M10 1.5 L12 3.5 L15 3 L15.5 6 L18 8 L16.5 10 L18 12.5 L15.5 14 L15 17 L12 16.5 L10 18.5 L8 16.5 L5 17 L4.5 14 L2 12.5 L3.5 10 L2 8 L4.5 6 L5 3 L8 3.5Z" fill="#fafafa" stroke="#333" stroke-width="1"/><circle cx="10" cy="10" r="3" fill="#fff" stroke="#333" stroke-width="1"/></svg>

<svg class="a" style="left:582px;top:15px" width="7" height="5"><path d="M0 0.5 L7 0.5 L3.5 4Z" fill="#333"/></svg>
<svg class="a" style="left:626px;top:15px" width="7" height="5"><path d="M0 0.5 L7 0.5 L3.5 4Z" fill="#333"/></svg>
<svg class="a" style="left:670px;top:15px" width="7" height="5"><path d="M0 0.5 L7 0.5 L3.5 4Z" fill="#333"/></svg>
<svg class="a" style="left:714px;top:15px" width="7" height="5"><path d="M0 0.5 L7 0.5 L3.5 4Z" fill="#333"/></svg>
<svg class="a" style="left:758px;top:15px" width="7" height="5"><path d="M0 0.5 L7 0.5 L3.5 4Z" fill="#333"/></svg>
<svg class="a" style="left:802px;top:15px" width="7" height="5"><path d="M0 0.5 L7 0.5 L3.5 4Z" fill="#aaa"/></svg>
<svg class="a" style="left:847px;top:15px" width="7" height="5"><path d="M0 0.5 L7 0.5 L3.5 4Z" fill="#333"/></svg>
<svg class="a" style="left:950px;top:15px" width="7" height="5"><path d="M0 0.5 L7 0.5 L3.5 4Z" fill="#333"/></svg>
<div class="a" style="left:515px;top:37px;width:1px;height:76px;background:#d8d8d8"></div>
<div class="a" style="left:567px;top:37px;width:1px;height:76px;background:#d8d8d8"></div>
<div class="a" style="left:619px;top:37px;width:1px;height:76px;background:#d8d8d8"></div>
<div class="a" style="left:671px;top:37px;width:1px;height:76px;background:#d8d8d8"></div>
<div class="a" style="left:735px;top:37px;width:1px;height:76px;background:#d8d8d8"></div>
<div class="a" style="left:797px;top:37px;width:1px;height:76px;background:#d8d8d8"></div>
<div class="rb" style="left:500px;top:61px;color:#111"><div>新建运</div><div>动算例</div></div>
<div class="rb" style="left:553px;top:61px;color:#111"><div>材料明</div><div>细表</div></div>
<div class="rb" style="left:605px;top:61px;color:#111"><div>爆炸视</div><div>图</div></div>
<svg class="a" style="left:641px;top:101px" width="8" height="6"><path d="M0.5 1 L7.5 1 L4 5Z" fill="#333"/></svg>
<div class="a" style="left:673px;top:36px;width:60px;height:77px;background:#b3b3b3;border:1px solid #8c8c8c"></div>
<div class="rb" style="left:663px;top:62px;font-size:11.5px;letter-spacing:0.2px">Instant3D</div>
<div class="rb" style="left:726px;top:61px;color:#111"><div>更新</div><div><span style="font-size:11.5px;letter-spacing:-0.2px">Speedpak</span></div><div>子装配</div><div>体</div></div>
<div class="rb" style="left:784px;top:61px;color:#111"><div>拍快照</div></div>
<div class="rb" style="left:833px;top:61px;color:#111"><div>大型装</div><div>配体设</div><div>置</div></div>

<svg class="a" style="left:530px;top:41px" width="22" height="22" viewBox="0 0 22 22">
<path d="M2 2 L6 6 M6 2 L2 6 M4 1 L4 7 M1 4 L7 4" stroke="#f0901e" stroke-width="1.2"/>
<circle cx="14" cy="8" r="5" fill="#f4f4f4" stroke="#555" stroke-width="1.2" stroke-dasharray="2 1"/><circle cx="14" cy="8" r="2" fill="#fff" stroke="#555"/>
<circle cx="8" cy="15" r="5" fill="#8d8d8d" stroke="#444" stroke-width="1.2" stroke-dasharray="2 1"/><circle cx="8" cy="15" r="1.8" fill="#ddd"/></svg>
<svg class="a" style="left:583px;top:42px" width="22" height="20" viewBox="0 0 22 20">
<rect x="1.5" y="1.5" width="12" height="11" fill="#fff" stroke="#333" stroke-width="0.9"/><path d="M1.5 5 L13.5 5 M1.5 8.5 L13.5 8.5 M5.5 1.5 L5.5 12.5 M9.5 1.5 L9.5 12.5" stroke="#333" stroke-width="0.8"/><rect x="1.5" y="1.5" width="12" height="3.5" fill="#2c77b0"/>
<path d="M9 12 L14 9.5 L14 7 L17 5.5 L21 7.5 L21 14 L15 18 L9 15Z" fill="#f1cf2e" stroke="#3a3000" stroke-width="0.8"/><path d="M15 7 L18 5.5 L21 7.5 L21 11 L18 12.5 L15 11Z" fill="#7cc3e6" stroke="#1d4f70" stroke-width="0.7"/></svg>
<svg class="a" style="left:634px;top:42px" width="24" height="22" viewBox="0 0 24 22">
<path d="M2 14 L6 12 L6 10 L9 8.5 L12 10 L12 16 L8 19 L2 16Z" fill="#f1cf2e" stroke="#3a3000" stroke-width="0.8"/>
<path d="M12 12 L17 8" stroke="#333" stroke-width="1" stroke-dasharray="1.5 1"/><path d="M16 5 L16 9" stroke="#333" stroke-width="1" stroke-dasharray="1.5 1"/>
<path d="M13 2 L16 1 L19 2 L19 5 L16 6 L13 5Z" fill="#7cc3e6" stroke="#1d4f70" stroke-width="0.8"/></svg>
<svg class="a" style="left:692px;top:40px" width="24" height="22" viewBox="0 0 24 22">
<path d="M8 2 L22 8 L19 14 L5 8Z" fill="#f2d23c" stroke="#555" stroke-width="0.8"/><path d="M9 4 L10 6 M12 5 L13 7 M15 6 L16 8 M18 7 L19 9" stroke="#555" stroke-width="0.7"/>
<path d="M2 8 L13 17" stroke="#2c77b0" stroke-width="2.4"/><path d="M9 18 L17 20 L14 13Z" fill="#2c77b0"/></svg>
<svg class="a" style="left:755px;top:41px" width="22" height="22" viewBox="0 0 22 22">
<path d="M8 3 L13 1 L20 3 L20 14 L14 17 L8 14Z" fill="#f4f4f4" stroke="#333" stroke-width="0.9"/><path d="M13 4 L17 2.5 L20 3.5 L20 10 L16 12 L13 10Z" fill="#7cc3e6" stroke="#1d4f70" stroke-width="0.7"/>
<path d="M3 20 L8 11 L13 20Z" fill="#f7d11e" stroke="#333" stroke-width="0.9"/><path d="M8 14 L8 17.5 M8 18.5 L8 19.3" stroke="#111" stroke-width="1.2"/></svg>
<svg class="a" style="left:814px;top:42px" width="20" height="18" viewBox="0 0 20 18">
<path d="M1.5 5 L6 5 L7.5 2 L12.5 2 L14 5 L18.5 5 L18.5 16 L1.5 16Z" fill="#e5e5e5" stroke="#333" stroke-width="1"/><circle cx="10" cy="10.5" r="4" fill="#fff" stroke="#333" stroke-width="1.2"/><circle cx="10" cy="10.5" r="1.8" fill="#555"/></svg>
<svg class="a" style="left:863px;top:41px" width="20" height="20" viewBox="0 0 20 20">
<path d="M1 9 L5 7 L5 4 L9 2 L13 4 L13 14 L9 17 L1 12 Z" fill="#f1cf2e" stroke="#3a3000" stroke-width="0.9"/><path d="M8 5 L12 3 L17 5 L17 10 L13 12 L8 10 Z" fill="#8fd0ec" stroke="#0d3b5a" stroke-width="0.9"/>
<path d="M0 14 L6 17 M0 16 L5 18.5" stroke="#999" stroke-width="0.8"/></svg>


<svg class="a" style="left:926px;top:122px" width="20" height="20" viewBox="0 0 20 20">
<circle cx="12" cy="8" r="6.5" fill="#eef6fa" stroke="#333" stroke-width="1.1"/><path d="M12 3.5 L10.5 5.5 L13.5 5.5Z M12 12.5 L10.5 10.5 L13.5 10.5Z M7.5 8 L9.5 6.5 L9.5 9.5Z M16.5 8 L14.5 6.5 L14.5 9.5Z" fill="#333"/><path d="M7.5 12.5 L1.5 18.5" stroke="#2c77b0" stroke-width="2.4"/></svg>
<svg class="a" style="left:951px;top:122px" width="20" height="20" viewBox="0 0 20 20">
<rect x="5" y="1" width="14" height="13" fill="none" stroke="#333" stroke-width="1" stroke-dasharray="2.5 1.5"/><circle cx="11" cy="8" r="5" fill="#eef6fa" stroke="#333" stroke-width="1.1"/><path d="M7 12 L1.5 18.5" stroke="#2c77b0" stroke-width="2.4"/></svg>
<svg class="a" style="left:977px;top:122px" width="20" height="20" viewBox="0 0 20 20">
<path d="M3 10 L14 2 L18 6 L7 14Z" fill="#eee" stroke="#333" stroke-width="1"/><path d="M2 9 L6 14" stroke="#333" stroke-width="1.2"/><path d="M9 15 L18 15 M12 12 L9 15 L12 18" stroke="#2c77b0" stroke-width="2" fill="none"/></svg>
<svg class="a" style="left:1003px;top:122px" width="20" height="20" viewBox="0 0 20 20">
<path d="M2 4 Q10 0 18 4 L18 16 Q10 20 2 16Z" fill="#2c77b0" stroke="#0d3b5a" stroke-width="1"/><path d="M7 5 Q10 4 13 5 L13 17 Q10 18 7 17Z" fill="#eee" stroke="#333" stroke-width="0.8"/>
<path d="M3 7 L6 5 M3 11 L6 9 M3 15 L6 13 M14 7 L17 5 M14 11 L17 9 M14 15 L17 13" stroke="#cfe7f4" stroke-width="0.9"/></svg>
<svg class="a" style="left:1029px;top:121px" width="21" height="21" viewBox="0 0 21 21">
<path d="M1.5 6 L6 1.5 L19.5 1.5 L19.5 15 L15 19.5 L1.5 19.5Z" fill="#eaf3f8" stroke="#333" stroke-width="1"/><rect x="1.5" y="6" width="13.5" height="13.5" fill="#4aa3d6" stroke="#333" stroke-width="1"/><path d="M15 6 L19.5 1.5" stroke="#333"/></svg>
<svg class="a" style="left:1069px;top:121px" width="20" height="21" viewBox="0 0 20 21">
<path d="M2 4 L8 1.5 L18 4 L18 18 L12 20 L2 17Z" fill="#4aa3d6" stroke="#333" stroke-width="1"/><path d="M12 6 L18 4 M12 6 L12 20 M12 6 L2 4" stroke="#333" fill="none"/><path d="M12 6 L18 4 L18 18 L12 20Z" fill="#f5f5f5" stroke="#333"/></svg>
<svg class="a" style="left:1108px;top:123px" width="22" height="16" viewBox="0 0 22 16">
<path d="M1 8 Q11 -2 21 8 Q11 18 1 8Z" fill="#d8d8d8" stroke="#666" stroke-width="0.9"/><circle cx="11" cy="8" r="4" fill="#555"/><path d="M11 1 L11 15" stroke="#222" stroke-width="1.3"/></svg>
<svg class="a" style="left:1148px;top:121px" width="22" height="22" viewBox="0 0 22 22">
<circle cx="10" cy="10" r="8.5" fill="#3ea63e"/><path d="M10 10 L10 1.5 A8.5 8.5 0 0 1 18.5 10Z" fill="#d9342b"/><path d="M10 10 L1.5 10 A8.5 8.5 0 0 1 10 1.5Z" fill="#2c77b0"/>
<path d="M20 12 L10 21 L8 21.5 L8.5 19.5 L18.5 10.5Z" fill="#f2c94c" stroke="#333" stroke-width="0.8"/></svg>
<svg class="a" style="left:1172px;top:121px" width="22" height="22" viewBox="0 0 22 22"><circle cx="10" cy="10" r="8.5" fill="#3ea63e"/><path d="M10 10 L10 1.5 A8.5 8.5 0 0 1 18.5 10Z" fill="#2c77b0"/><rect x="0" y="13" width="8" height="8" fill="#333"/></svg>

<svg class="a" style="left:1055px;top:131px" width="7" height="5"><path d="M0 0.5 L7 0.5 L3.5 4Z" fill="#555"/></svg>
<svg class="a" style="left:1095px;top:131px" width="7" height="5"><path d="M0 0.5 L7 0.5 L3.5 4Z" fill="#555"/></svg>
<svg class="a" style="left:1135px;top:131px" width="7" height="5"><path d="M0 0.5 L7 0.5 L3.5 4Z" fill="#555"/></svg>
<svg class="a" style="left:244px;top:156px" width="110" height="25" viewBox="0 0 110 25">
<path d="M0.5 0.5 L32 0.5 L42 12 L32 23.5 L0.5 23.5Z" fill="#c6dfea" stroke="#b8c8d0" stroke-width="1"/>
<path d="M32 0.5 L64 0.5 L75 12 L64 23.5 L32 23.5 L42 12Z" fill="#c6dfea" stroke="#b8c8d0" stroke-width="1"/>
<path d="M64 0.5 L107.5 0.5 L107.5 23.5 L64 23.5 L75 12Z" fill="#8fbedc" stroke="#6f93c0" stroke-width="1"/>
<g opacity="0.8"><use href="#asm" x="13" y="3" width="17" height="17"/><use href="#asm" x="45" y="3" width="17" height="17"/><use href="#part" x="77" y="3" width="17" height="17"/></g>
</svg>
<svg class="a" style="left:0;top:0" width="1184" height="1038" viewBox="0 0 1184 1038">
<defs>
<linearGradient id="gapg" x1="0" y1="0" x2="0" y2="1"><stop offset="0" stop-color="#a2d4e6"/><stop offset="0.05" stop-color="#94bccb"/><stop offset="0.15" stop-color="#849fa9"/><stop offset="0.5" stop-color="#8fa3aa"/><stop offset="1" stop-color="#adb9bd"/></linearGradient>
<linearGradient id="topg" x1="0" y1="0" x2="1" y2="1"><stop offset="0" stop-color="#acadbd"/><stop offset="0.5" stop-color="#a7a8b8"/><stop offset="1" stop-color="#adaebe"/></linearGradient>
</defs>
<polygon points="534.5,426.0 893.5,557.0 893.5,917.0 534.5,786.0" fill="#5c5c61" />
<polygon points="555.3,433.6 570.4,439.1 570.4,799.1 555.3,793.6" fill="url(#gapg)" />
<polygon points="552.5,432.6 555.3,433.6 555.3,793.6 552.5,792.5" fill="#7a7a80" />
<polygon points="672.0,476.2 688.9,482.3 688.9,842.3 672.0,836.2" fill="#4e4e55" />
<line x1="672.0" y1="476.2" x2="672.0" y2="836.2" stroke="#111" stroke-width="1"/>
<line x1="675.2" y1="477.4" x2="675.2" y2="837.4" stroke="#8a8a92" stroke-width="1"/>
<line x1="678.1" y1="478.4" x2="678.1" y2="838.4" stroke="#111" stroke-width="1"/>
<line x1="683.5" y1="480.4" x2="683.5" y2="840.4" stroke="#6e6e76" stroke-width="1"/>
<line x1="688.9" y1="482.3" x2="688.9" y2="842.3" stroke="#111" stroke-width="1"/>
<polygon points="795.5,521.2 811.6,527.1 811.6,887.1 795.5,881.2" fill="#505058" />
<line x1="795.5" y1="521.2" x2="795.5" y2="881.2" stroke="#111" stroke-width="1"/>
<line x1="799.1" y1="522.5" x2="799.1" y2="882.5" stroke="#84848c" stroke-width="1"/>
<line x1="802.0" y1="523.6" x2="802.0" y2="883.6" stroke="#111" stroke-width="1"/>
<line x1="807.3" y1="525.6" x2="807.3" y2="885.6" stroke="#111" stroke-width="1"/>
<line x1="811.6" y1="527.1" x2="811.6" y2="887.1" stroke="#111" stroke-width="1"/>
<polygon points="888.1,555.0 893.5,557.0 893.5,917.0 888.1,915.0" fill="#8a8a92" />
<line x1="534.5" y1="426.0" x2="534.5" y2="786.0" stroke="#151515" stroke-width="1"/>
<line x1="555.3" y1="433.6" x2="555.3" y2="793.6" stroke="#151515" stroke-width="1"/>
<line x1="570.4" y1="439.1" x2="570.4" y2="799.1" stroke="#151515" stroke-width="1"/>
<line x1="672.0" y1="476.2" x2="672.0" y2="836.2" stroke="#151515" stroke-width="1"/>
<line x1="688.9" y1="482.3" x2="688.9" y2="842.3" stroke="#151515" stroke-width="1"/>
<line x1="795.5" y1="521.2" x2="795.5" y2="881.2" stroke="#151515" stroke-width="1"/>
<line x1="811.6" y1="527.1" x2="811.6" y2="887.1" stroke="#151515" stroke-width="1"/>
<line x1="888.1" y1="555.0" x2="888.1" y2="915.0" stroke="#151515" stroke-width="1"/>
<line x1="893.5" y1="557.0" x2="893.5" y2="917.0" stroke="#151515" stroke-width="1"/>
<polygon points="534.5,547.0 555.3,554.6 555.3,570.6 534.5,563.0" fill="#55555c" />
<polygon points="534.5,552.0 555.3,559.6 555.3,564.6 534.5,557.0" fill="#8a8a95" />
<line x1="534.5" y1="547.0" x2="555.3" y2="554.6" stroke="#111" stroke-width="1"/>
<line x1="534.5" y1="552.0" x2="555.3" y2="559.6" stroke="#222" stroke-width="0.8"/>
<line x1="534.5" y1="557.0" x2="555.3" y2="564.6" stroke="#222" stroke-width="0.8"/>
<line x1="534.5" y1="554.5" x2="555.3" y2="562.1" stroke="#3a3a40" stroke-width="1.2" stroke-dasharray="1.5 3"/>
<polygon points="534.5,770.0 555.3,777.6 555.3,793.6 534.5,786.0" fill="#55555c" />
<polygon points="534.5,775.0 555.3,782.6 555.3,787.6 534.5,780.0" fill="#8a8a95" />
<line x1="534.5" y1="770.0" x2="555.3" y2="777.6" stroke="#111" stroke-width="1"/>
<line x1="534.5" y1="775.0" x2="555.3" y2="782.6" stroke="#222" stroke-width="0.8"/>
<line x1="534.5" y1="780.0" x2="555.3" y2="787.6" stroke="#222" stroke-width="0.8"/>
<line x1="534.5" y1="777.5" x2="555.3" y2="785.1" stroke="#3a3a40" stroke-width="1.2" stroke-dasharray="1.5 3"/>
<polygon points="570.4,566.1 672.0,603.2 672.0,619.2 570.4,582.1" fill="#55555c" />
<polygon points="570.4,571.1 672.0,608.2 672.0,613.2 570.4,576.1" fill="#8a8a95" />
<line x1="570.4" y1="566.1" x2="672.0" y2="603.2" stroke="#111" stroke-width="1"/>
<line x1="570.4" y1="571.1" x2="672.0" y2="608.2" stroke="#222" stroke-width="0.8"/>
<line x1="570.4" y1="576.1" x2="672.0" y2="613.2" stroke="#222" stroke-width="0.8"/>
<line x1="570.4" y1="573.6" x2="672.0" y2="610.7" stroke="#3a3a40" stroke-width="1.2" stroke-dasharray="1.5 3"/>
<polygon points="570.4,783.1 672.0,820.2 672.0,836.2 570.4,799.1" fill="#55555c" />
<polygon points="570.4,788.1 672.0,825.2 672.0,830.2 570.4,793.1" fill="#8a8a95" />
<line x1="570.4" y1="783.1" x2="672.0" y2="820.2" stroke="#111" stroke-width="1"/>
<line x1="570.4" y1="788.1" x2="672.0" y2="825.2" stroke="#222" stroke-width="0.8"/>
<line x1="570.4" y1="793.1" x2="672.0" y2="830.2" stroke="#222" stroke-width="0.8"/>
<line x1="570.4" y1="790.6" x2="672.0" y2="827.7" stroke="#3a3a40" stroke-width="1.2" stroke-dasharray="1.5 3"/>
<polygon points="688.9,604.3 795.5,643.2 795.5,659.2 688.9,620.3" fill="#55555c" />
<polygon points="688.9,609.3 795.5,648.2 795.5,653.2 688.9,614.3" fill="#8a8a95" />
<line x1="688.9" y1="604.3" x2="795.5" y2="643.2" stroke="#111" stroke-width="1"/>
<line x1="688.9" y1="609.3" x2="795.5" y2="648.2" stroke="#222" stroke-width="0.8"/>
<line x1="688.9" y1="614.3" x2="795.5" y2="653.2" stroke="#222" stroke-width="0.8"/>
<line x1="688.9" y1="611.8" x2="795.5" y2="650.7" stroke="#3a3a40" stroke-width="1.2" stroke-dasharray="1.5 3"/>
<polygon points="688.9,826.3 795.5,865.2 795.5,881.2 688.9,842.3" fill="#55555c" />
<polygon points="688.9,831.3 795.5,870.2 795.5,875.2 688.9,836.3" fill="#8a8a95" />
<line x1="688.9" y1="826.3" x2="795.5" y2="865.2" stroke="#111" stroke-width="1"/>
<line x1="688.9" y1="831.3" x2="795.5" y2="870.2" stroke="#222" stroke-width="0.8"/>
<line x1="688.9" y1="836.3" x2="795.5" y2="875.2" stroke="#222" stroke-width="0.8"/>
<line x1="688.9" y1="833.8" x2="795.5" y2="872.7" stroke="#3a3a40" stroke-width="1.2" stroke-dasharray="1.5 3"/>
<polygon points="811.6,648.1 888.1,676.0 888.1,692.0 811.6,664.1" fill="#55555c" />
<polygon points="811.6,653.1 888.1,681.0 888.1,686.0 811.6,658.1" fill="#8a8a95" />
<line x1="811.6" y1="648.1" x2="888.1" y2="676.0" stroke="#111" stroke-width="1"/>
<line x1="811.6" y1="653.1" x2="888.1" y2="681.0" stroke="#222" stroke-width="0.8"/>
<line x1="811.6" y1="658.1" x2="888.1" y2="686.0" stroke="#222" stroke-width="0.8"/>
<line x1="811.6" y1="655.6" x2="888.1" y2="683.5" stroke="#3a3a40" stroke-width="1.2" stroke-dasharray="1.5 3"/>
<polygon points="811.6,871.1 888.1,899.0 888.1,915.0 811.6,887.1" fill="#55555c" />
<polygon points="811.6,876.1 888.1,904.0 888.1,909.0 811.6,881.1" fill="#8a8a95" />
<line x1="811.6" y1="871.1" x2="888.1" y2="899.0" stroke="#111" stroke-width="1"/>
<line x1="811.6" y1="876.1" x2="888.1" y2="904.0" stroke="#222" stroke-width="0.8"/>
<line x1="811.6" y1="881.1" x2="888.1" y2="909.0" stroke="#222" stroke-width="0.8"/>
<line x1="811.6" y1="878.6" x2="888.1" y2="906.5" stroke="#3a3a40" stroke-width="1.2" stroke-dasharray="1.5 3"/>
<line x1="534.5" y1="786.0" x2="893.5" y2="917.0" stroke="#222" stroke-width="1.2"/>
<polygon points="765.0,216.0 1124.0,347.0 893.5,549.0 534.5,418.0" fill="#a0c3cb" />
<polygon points="534.5,418.0 893.5,549.0 893.5,557.0 534.5,426.0" fill="#6f6f77" stroke="#111" stroke-width="0.8" stroke-linejoin="round" />
<polygon points="718.9,269.4 731.1,273.9 721.0,282.8 708.8,278.3" fill="#c3c6cc" stroke="#2a2a2a" stroke-width="0.7" stroke-linejoin="round" />
<polygon points="796.8,297.8 816.6,305.0 806.4,313.9 786.7,306.7" fill="#c3c6cc" stroke="#2a2a2a" stroke-width="0.7" stroke-linejoin="round" />
<polygon points="1028.4,382.3 1048.1,389.5 1038.0,398.4 1018.2,391.2" fill="#c3c6cc" stroke="#2a2a2a" stroke-width="0.7" stroke-linejoin="round" />
<polygon points="602.0,371.8 614.3,376.3 604.8,384.6 592.6,380.1" fill="#c3c6cc" stroke="#2a2a2a" stroke-width="0.7" stroke-linejoin="round" />
<polygon points="679.9,400.3 699.7,407.5 690.2,415.7 670.5,408.5" fill="#c3c6cc" stroke="#2a2a2a" stroke-width="0.7" stroke-linejoin="round" />
<polygon points="911.5,484.8 931.2,492.0 921.8,500.2 902.1,493.0" fill="#c3c6cc" stroke="#2a2a2a" stroke-width="0.7" stroke-linejoin="round" />
<polygon points="785.8,223.6 733.3,269.7 733.3,276.7 785.8,230.6" fill="#9c9a98" stroke="#111" stroke-width="0.8" stroke-linejoin="round" />
<polygon points="712.4,262.1 733.3,269.7 733.3,276.7 712.4,269.1" fill="#8c8a88" stroke="#111" stroke-width="0.8" stroke-linejoin="round" />
<polygon points="765.0,216.0 785.8,223.6 733.3,269.7 712.4,262.1" fill="url(#topg)" stroke="#111" stroke-width="1.2" stroke-linejoin="round" />
<polygon points="903.6,266.6 851.0,312.6 851.0,319.6 903.6,273.6" fill="#9c9a98" stroke="#111" stroke-width="0.8" stroke-linejoin="round" />
<polygon points="749.4,275.5 851.0,312.6 851.0,319.6 749.4,282.5" fill="#8c8a88" stroke="#111" stroke-width="0.8" stroke-linejoin="round" />
<polygon points="802.0,229.5 903.6,266.6 851.0,312.6 749.4,275.5" fill="url(#topg)" stroke="#111" stroke-width="1.2" stroke-linejoin="round" />
<polygon points="1027.1,311.6 974.5,357.7 974.5,364.7 1027.1,318.6" fill="#9c9a98" stroke="#111" stroke-width="0.8" stroke-linejoin="round" />
<polygon points="870.4,319.7 974.5,357.7 974.5,364.7 870.4,326.7" fill="#8c8a88" stroke="#111" stroke-width="0.8" stroke-linejoin="round" />
<polygon points="923.0,273.6 1027.1,311.6 974.5,357.7 870.4,319.7" fill="url(#topg)" stroke="#111" stroke-width="1.2" stroke-linejoin="round" />
<polygon points="1124.0,347.0 1071.4,393.1 1071.4,400.1 1124.0,354.0" fill="#9c9a98" stroke="#111" stroke-width="0.8" stroke-linejoin="round" />
<polygon points="989.6,363.2 1071.4,393.1 1071.4,400.1 989.6,370.2" fill="#8c8a88" stroke="#111" stroke-width="0.8" stroke-linejoin="round" />
<polygon points="1042.1,317.1 1124.0,347.0 1071.4,393.1 989.6,363.2" fill="url(#topg)" stroke="#111" stroke-width="1.2" stroke-linejoin="round" />
<polygon points="723.1,278.5 616.4,372.1 616.4,379.1 723.1,285.5" fill="#9c9a98" stroke="#111" stroke-width="0.8" stroke-linejoin="round" />
<polygon points="595.6,364.5 616.4,372.1 616.4,379.1 595.6,371.5" fill="#8c8a88" stroke="#111" stroke-width="0.8" stroke-linejoin="round" />
<polygon points="702.3,270.9 723.1,278.5 616.4,372.1 595.6,364.5" fill="url(#topg)" stroke="#111" stroke-width="1.2" stroke-linejoin="round" />
<polygon points="840.9,321.5 734.2,415.0 734.2,422.0 840.9,328.5" fill="#9c9a98" stroke="#111" stroke-width="0.8" stroke-linejoin="round" />
<polygon points="632.6,378.0 734.2,415.0 734.2,422.0 632.6,385.0" fill="#8c8a88" stroke="#111" stroke-width="0.8" stroke-linejoin="round" />
<polygon points="739.3,284.4 840.9,321.5 734.2,415.0 632.6,378.0" fill="url(#topg)" stroke="#111" stroke-width="1.2" stroke-linejoin="round" />
<polygon points="964.4,366.6 857.7,460.1 857.7,467.1 964.4,373.6" fill="#9c9a98" stroke="#111" stroke-width="0.8" stroke-linejoin="round" />
<polygon points="753.5,422.1 857.7,460.1 857.7,467.1 753.5,429.1" fill="#8c8a88" stroke="#111" stroke-width="0.8" stroke-linejoin="round" />
<polygon points="860.3,328.6 964.4,366.6 857.7,460.1 753.5,422.1" fill="url(#topg)" stroke="#111" stroke-width="1.2" stroke-linejoin="round" />
<polygon points="1061.3,401.9 954.6,495.5 954.6,502.5 1061.3,408.9" fill="#9c9a98" stroke="#111" stroke-width="0.8" stroke-linejoin="round" />
<polygon points="872.7,465.6 954.6,495.5 954.6,502.5 872.7,472.6" fill="#8c8a88" stroke="#111" stroke-width="0.8" stroke-linejoin="round" />
<polygon points="979.5,372.1 1061.3,401.9 954.6,495.5 872.7,465.6" fill="url(#topg)" stroke="#111" stroke-width="1.2" stroke-linejoin="round" />
<polygon points="607.0,380.4 555.3,425.6 555.3,432.6 607.0,387.4" fill="#9c9a98" stroke="#111" stroke-width="0.8" stroke-linejoin="round" />
<polygon points="534.5,418.0 555.3,425.6 555.3,432.6 534.5,425.0" fill="#72727a" stroke="#111" stroke-width="0.8" stroke-linejoin="round" />
<polygon points="586.1,372.8 607.0,380.4 555.3,425.6 534.5,418.0" fill="url(#topg)" stroke="#111" stroke-width="1.2" stroke-linejoin="round" />
<polygon points="724.7,423.3 673.1,468.6 673.1,475.6 724.7,430.3" fill="#9c9a98" stroke="#111" stroke-width="0.8" stroke-linejoin="round" />
<polygon points="571.5,431.5 673.1,468.6 673.1,475.6 571.5,438.5" fill="#72727a" stroke="#111" stroke-width="0.8" stroke-linejoin="round" />
<polygon points="623.1,386.2 724.7,423.3 673.1,468.6 571.5,431.5" fill="url(#topg)" stroke="#111" stroke-width="1.2" stroke-linejoin="round" />
<polygon points="848.2,468.4 796.6,513.6 796.6,520.6 848.2,475.4" fill="#9c9a98" stroke="#111" stroke-width="0.8" stroke-linejoin="round" />
<polygon points="692.5,475.6 796.6,513.6 796.6,520.6 692.5,482.6" fill="#72727a" stroke="#111" stroke-width="0.8" stroke-linejoin="round" />
<polygon points="744.1,430.4 848.2,468.4 796.6,513.6 692.5,475.6" fill="url(#topg)" stroke="#111" stroke-width="1.2" stroke-linejoin="round" />
<polygon points="945.1,503.8 893.5,549.0 893.5,556.0 945.1,510.8" fill="#9c9a98" stroke="#111" stroke-width="0.8" stroke-linejoin="round" />
<polygon points="811.6,519.1 893.5,549.0 893.5,556.0 811.6,526.1" fill="#72727a" stroke="#111" stroke-width="0.8" stroke-linejoin="round" />
<polygon points="863.3,473.9 945.1,503.8 893.5,549.0 811.6,519.1" fill="url(#topg)" stroke="#111" stroke-width="1.2" stroke-linejoin="round" />
<circle cx="828" cy="268" r="1.3" fill="#3a3a44"/>
<circle cx="950" cy="313" r="1.3" fill="#3a3a44"/>
<circle cx="1066" cy="347" r="1.3" fill="#3a3a44"/>
<circle cx="1078" cy="351" r="1.3" fill="#3a3a44"/>
<circle cx="963" cy="428" r="1.3" fill="#3a3a44"/>
<circle cx="978" cy="432" r="1.3" fill="#3a3a44"/>
<circle cx="645" cy="430" r="1.3" fill="#3a3a44"/>
<circle cx="767" cy="473" r="1.3" fill="#3a3a44"/>
<circle cx="868" cy="531" r="1.3" fill="#3a3a44"/>
<circle cx="883" cy="535" r="1.3" fill="#3a3a44"/>
<polygon points="903.6,266.6 923.0,273.6 692.5,475.6 673.1,468.6" fill="#a59d8c" />
<polygon points="907.5,268.0 918.3,271.9 687.8,473.9 677.0,470.0" fill="#b2a996" />
<line x1="903.6" y1="266.6" x2="673.1" y2="468.6" stroke="#111" stroke-width="1.2"/>
<line x1="905.4" y1="267.2" x2="674.9" y2="469.2" stroke="#2a2a2a" stroke-width="0.9"/>
<line x1="906.8" y1="267.7" x2="676.3" y2="469.7" stroke="#e6e2d8" stroke-width="1.0" stroke-dasharray="2 2"/>
<line x1="907.9" y1="268.1" x2="677.4" y2="470.1" stroke="#6a6456" stroke-width="0.7"/>
<line x1="917.9" y1="271.8" x2="687.4" y2="473.8" stroke="#5a5446" stroke-width="0.8"/>
<line x1="919.7" y1="272.5" x2="689.2" y2="474.5" stroke="#222" stroke-width="1.1"/>
<line x1="921.5" y1="273.1" x2="691.0" y2="475.1" stroke="#3c4a66" stroke-width="0.9"/>
<line x1="923.0" y1="273.6" x2="692.5" y2="475.6" stroke="#111" stroke-width="1.2"/>
<circle cx="896.8" cy="284.1" r="1.4" fill="#d8d4cc" stroke="#555" stroke-width="0.5"/>
<circle cx="836.8" cy="336.6" r="1.4" fill="#d8d4cc" stroke="#555" stroke-width="0.5"/>
<circle cx="797.7" cy="371.0" r="1.4" fill="#d8d4cc" stroke="#555" stroke-width="0.5"/>
<circle cx="770.0" cy="395.2" r="1.4" fill="#d8d4cc" stroke="#555" stroke-width="0.5"/>
<circle cx="705.5" cy="451.8" r="1.4" fill="#d8d4cc" stroke="#555" stroke-width="0.5"/>
<polygon points="673.1,468.6 692.5,475.6 692.5,483.6 673.1,476.6" fill="#c4b79a" stroke="#111" stroke-width="0.8" stroke-linejoin="round" />
<polyline points="534.5,418.0 765.0,216.0 1124.0,347.0" fill="none" stroke="#000" stroke-width="1.8"/>
</svg>
<div class="a" style="left:2px;top:973px;width:64px;height:15px;background:#9b9b9b;border-top:2px solid #222"></div>
<div class="a" style="left:2px;top:975px;width:1px;height:13px;background:#c8c8c8"></div>
<div class="a" style="left:18px;top:975px;width:1px;height:13px;background:#c8c8c8"></div>
<div class="a" style="left:34px;top:975px;width:1px;height:13px;background:#c8c8c8"></div>
<div class="a" style="left:50px;top:975px;width:1px;height:13px;background:#c8c8c8"></div>
<svg class="a" style="left:2px;top:975px" width="64" height="13" viewBox="0 0 64 13">
<path d="M5 2 L5 11 M12 2 L6 6.5 L12 11Z" stroke="#6a6a6a" fill="#6a6a6a"/><path d="M27 2 L21 6.5 L27 11Z" fill="#6a6a6a"/><path d="M37 2 L43 6.5 L37 11Z" fill="#6a6a6a"/><path d="M52 2 L58 6.5 L52 11Z M59 2 L59 11" stroke="#6a6a6a" fill="#6a6a6a"/></svg>
<div class="t" style="left:79px;top:972px;font-size:13px;line-height:16px;color:#222">模型</div>
<div class="a" style="left:114px;top:973px;width:85px;height:15px;background:#d4d4d4;border:1px solid #a8a8a8;border-top:none;font-size:13px;line-height:14px;color:#222;padding-left:7px;white-space:nowrap">运动算例 1</div>
<div class="a" style="left:3px;top:993.0px;width:3px;height:3px;border-radius:2px;background:#9a9a9a"></div>
<div class="a" style="left:3px;top:996.6px;width:3px;height:3px;border-radius:2px;background:#9a9a9a"></div>
<div class="a" style="left:3px;top:1000.2px;width:3px;height:3px;border-radius:2px;background:#9a9a9a"></div>
<div class="a" style="left:3px;top:1003.8px;width:3px;height:3px;border-radius:2px;background:#9a9a9a"></div>
<div class="a" style="left:3px;top:1007.4px;width:3px;height:3px;border-radius:2px;background:#9a9a9a"></div>
<div class="a" style="left:3px;top:1011.0px;width:3px;height:3px;border-radius:2px;background:#9a9a9a"></div>
<div class="a" style="left:3px;top:1014.6px;width:3px;height:3px;border-radius:2px;background:#9a9a9a"></div>
<div class="a" style="left:3px;top:1018.2px;width:3px;height:3px;border-radius:2px;background:#9a9a9a"></div>
<svg class="a" style="left:0;top:988px" width="1184" height="34" viewBox="0 988 1184 34"><path d="M21 997 L33 997 L29 1003 L29 1011 L25 1011 L25 1003Z" fill="#e6e6e6" stroke="#c8c8c8"/><path d="M45 996 L57 996 L53 1002 L53 1008 M49 999 L61 999 L57 1005 L57 1013 L53 1013 L53 1005Z" fill="#f0f0f0" stroke="#c8c8c8"/><path d="M72 996 L84 996 L80 1001 M75 999 L87 999 L83 1004 M78 1002 L90 1002 L86 1007 L86 1014 L82 1014 L82 1007Z" fill="#d57ae8" stroke="#6b2a8a"/><rect x="95.5" y="993.5" width="43" height="24" fill="#ababab" stroke="#7d7d7d"/><path d="M102 997 L102 1012 L106 1008.5 L109 1014 L111 1013 L108.5 1007.5 L113 1007.5Z" fill="#fff" stroke="#222" stroke-linejoin="round"/><path d="M128 1006 L134 1006 L131 1009Z" fill="#333"/><path d="M143 997 L143 1012 L147 1008.5 L150 1014 L152 1013 L149.5 1007.5 L154 1007.5Z" fill="#fff" stroke="#222"/><path d="M147 996 L160 1007 L154 1008 L157 1013 L154 1014 L151 1009 L147 1012Z" fill="#222"/><rect x="168" y="995" width="1" height="24" fill="#9a9a9a"/><circle cx="185" cy="1001" r="2.6" fill="#3d8fc6" stroke="#1e4c6c"/><path d="M189 1007 L196 1007 L193.5 1010 L193.5 1013 L191.5 1013 L191.5 1010Z" fill="#9b3fc4"/><rect x="211" y="994" width="2" height="18" fill="#2c6fa0"/><path d="M216 1007 L223 1007 L220.5 1010 L220.5 1013 L218.5 1013 L218.5 1010Z" fill="#9b3fc4"/><path d="M232 995 L245 995 L245 1008 L232 1008Z" fill="#54a7d6" stroke="#1e4c6c"/><path d="M243 1007 L250 1007 L247.5 1010 L247.5 1013 L245.5 1013 L245.5 1010Z" fill="#9b3fc4"/><path d="M259 1000 Q264 995 268 999 Q272 1003 276 999 L276 1006 Q272 1010 268 1006 Q264 1002 259 1007Z" fill="#54a7d6" stroke="#1e4c6c"/><path d="M270 1007 L277 1007 L274.5 1010 L274.5 1013 L272.5 1013 L272.5 1010Z" fill="#9b3fc4"/><path d="M287 998 L292 995 L299 997 L299 1008 L294 1011 L287 1009Z" fill="#54a7d6" stroke="#1e4c6c"/><path d="M296 1007 L303 1007 L300.5 1010 L300.5 1013 L298.5 1013 L298.5 1010Z" fill="#9b3fc4"/><path d="M313 1011 L328 996" stroke="#2c6fa0" stroke-width="1.6" stroke-dasharray="2.5 1.5"/><path d="M322 1007 L329 1007 L326.5 1010 L326.5 1013 L324.5 1013 L324.5 1010Z" fill="#9b3fc4"/><path d="M340 998 L350 995 L350 1008 L340 1011Z" fill="#54a7d6" stroke="#1e4c6c"/><path d="M345 993 L345 1013" stroke="#111" stroke-dasharray="2 1"/><path d="M349 1007 L356 1007 L353.5 1010 L353.5 1013 L351.5 1013 L351.5 1010Z" fill="#9b3fc4"/><rect x="370" y="999" width="5" height="5" fill="#54a7d6" stroke="#1e4c6c"/><path d="M376 1007 L383 1007 L380.5 1010 L380.5 1013 L378.5 1013 L378.5 1010Z" fill="#9b3fc4"/><path d="M397 995 L397 1010 L409 1010 M397 995 L404 995" stroke="#2c6fa0" stroke-width="1.8" fill="none"/><path d="M400 1000 L410 1000 M400 1005 L410 1005 M404 997 L404 1010" stroke="#ccc"/><path d="M403 1007 L410 1007 L407.5 1010 L407.5 1013 L405.5 1013 L405.5 1010Z" fill="#9b3fc4"/><path d="M424 995 L436 995 M424 995 L424 1011" stroke="#111" stroke-width="1.2"/><path d="M425 995 L436 995" stroke="#2c6fa0" stroke-width="1.6"/><rect x="422" y="993" width="4" height="4" fill="#fff" stroke="#111"/><rect x="434" y="993" width="4" height="4" fill="#fff" stroke="#111"/><rect x="422" y="1009" width="4" height="4" fill="#fff" stroke="#111"/><path d="M430 1007 L437 1007 L434.5 1010 L434.5 1013 L432.5 1013 L432.5 1010Z" fill="#9b3fc4"/><path d="M448 1012 L463 996" stroke="#2c6fa0" stroke-width="1.8"/><rect x="453" y="1002" width="4" height="4" fill="#fff" stroke="#111"/><path d="M458 1007 L465 1007 L462.5 1010 L462.5 1013 L460.5 1013 L460.5 1010Z" fill="#9b3fc4"/><path d="M518 996 L518 1012 M518 998 L532 998 L532 1004 M518 1004 L532 1004" stroke="#888" fill="#eee"/><path d="M529 1007 L536 1007 L533.5 1010 L533.5 1013 L531.5 1013 L531.5 1010Z" fill="#9b3fc4"/><path d="M544 1000 L548 995 L558 1001 L551 1006Z" fill="#fff" stroke="#222" stroke-width="1.3"/><path d="M555 1007 L562 1007 L559.5 1010 L559.5 1013 L557.5 1013 L557.5 1010Z" fill="#9b3fc4"/><path d="M571 1003 L575 1010 L585 994" stroke="#222" stroke-width="1.3" fill="none"/><path d="M582 1007 L589 1007 L586.5 1010 L586.5 1013 L584.5 1013 L584.5 1010Z" fill="#9b3fc4"/><rect x="599" y="996" width="14" height="8" fill="#fff" stroke="#222"/><path d="M603 1000 L613 1000" stroke="#222"/><path d="M610 1007 L617 1007 L614.5 1010 L614.5 1013 L612.5 1013 L612.5 1010Z" fill="#9b3fc4"/><circle cx="633" cy="1000" r="5" fill="#fff" stroke="#222"/><path d="M625 1010 L633 1005" stroke="#222" stroke-width="1.3"/><path d="M636 1007 L643 1007 L640.5 1010 L640.5 1013 L638.5 1013 L638.5 1010Z" fill="#9b3fc4"/><path d="M652 1009 L660 995 L666 1009Z" fill="#fff" stroke="#222" stroke-width="1.2"/><rect x="652" y="1009" width="12" height="3" fill="#222"/><path d="M663 1007 L670 1007 L667.5 1010 L667.5 1013 L665.5 1013 L665.5 1010Z" fill="#9b3fc4"/><path d="M680 1009 L684 998 L688 1003 L694 995" stroke="#222" stroke-width="1.3" fill="none"/><path d="M691 1007 L698 1007 L695.5 1010 L695.5 1013 L693.5 1013 L693.5 1010Z" fill="#9b3fc4"/><path d="M707 995 L707 1010 L721 1010" stroke="#222" stroke-width="1.1" fill="none"/><path d="M711 1004 Q715 1000 721 1006" stroke="#222" fill="none"/><path d="M718 1007 L725 1007 L722.5 1010 L722.5 1013 L720.5 1013 L720.5 1010Z" fill="#9b3fc4"/><circle cx="741" cy="1002" r="6" fill="#fff" stroke="#222"/><path d="M733 1009 L747 1009" stroke="#222" stroke-width="1.4"/><path d="M744 1007 L751 1007 L748.5 1010 L748.5 1013 L746.5 1013 L746.5 1010Z" fill="#9b3fc4"/><path d="M760 995 L774 995 L774 1004 L768 1010 L760 1004Z" fill="#fff" stroke="#222" stroke-dasharray="2 1"/><path d="M771 1007 L778 1007 L775.5 1010 L775.5 1013 L773.5 1013 L773.5 1010Z" fill="#9b3fc4"/><rect x="787" y="996" width="13" height="13" fill="#fff" stroke="#222"/><text x="795" y="1007" font-size="8" text-anchor="middle" fill="#222">A</text><path d="M798 1007 L805 1007 L802.5 1010 L802.5 1013 L800.5 1013 L800.5 1010Z" fill="#9b3fc4"/><circle cx="822" cy="1002" r="6" fill="#fff" stroke="#222"/><path d="M822 996 A6 6 0 0 1 828 1002 L822 1002Z M822 1002 L822 1008 A6 6 0 0 1 816 1002Z" fill="#222"/><path d="M825 1007 L832 1007 L829.5 1010 L829.5 1013 L827.5 1013 L827.5 1010Z" fill="#9b3fc4"/><path d="M842 1001 L856 1001" stroke="#222" stroke-width="1.4"/><rect x="846" y="997" width="7" height="7" fill="#54a7d6" stroke="#1e4c6c"/><path d="M853 1007 L860 1007 L857.5 1010 L857.5 1013 L855.5 1013 L855.5 1010Z" fill="#9b3fc4"/><path d="M869 1001 L883 1001" stroke="#222" stroke-width="1.4"/><rect x="873" y="997" width="7" height="7" fill="#54a7d6" stroke="#1e4c6c"/><path d="M880 1007 L887 1007 L884.5 1010 L884.5 1013 L882.5 1013 L882.5 1010Z" fill="#9b3fc4"/><rect x="897" y="996" width="14" height="12" fill="#54a7d6" stroke="#1e4c6c"/><path d="M901 1004 L905 996 L911 1004Z" fill="#fff" stroke="#222"/><path d="M908 1007 L915 1007 L912.5 1010 L912.5 1013 L910.5 1013 L910.5 1010Z" fill="#9b3fc4"/><rect x="925" y="995" width="2" height="16" fill="#2c6fa0"/><path d="M929 1004 L933 996 L939 1004Z" fill="#fff" stroke="#222"/><path d="M936 1007 L943 1007 L940.5 1010 L940.5 1013 L938.5 1013 L938.5 1010Z" fill="#9b3fc4"/><circle cx="952" cy="1001" r="2.5" fill="#3d8fc6" stroke="#1e4c6c"/><path d="M956 1004 L960 996 L966 1004Z" fill="#fff" stroke="#222"/><path d="M963 1007 L970 1007 L967.5 1010 L967.5 1013 L965.5 1013 L965.5 1010Z" fill="#9b3fc4"/><rect x="979" y="995" width="1" height="24" fill="#9a9a9a"/></svg>
<div class="t" style="left:2px;top:1025px;font-size:12.4px;line-height:16px;color:#111">在 0 和 75 百分比之间切换零部件的透明度。</div>
<svg class="a" style="left:255px;top:872px" width="55" height="60" viewBox="255 872 55 60">
<path d="M270 914 L270 895" stroke="#2a8a2a" stroke-width="3.2"/><path d="M266.5 897 L270 889.5 L273.5 897Z" fill="#5cc85c" stroke="#1a6a1a" stroke-width="0.6"/>
<path d="M271 913 L283 903" stroke="#d23030" stroke-width="3"/><path d="M279 900 L286 899 L284.5 906Z" fill="#b01010"/>
<path d="M270 914 L290 922" stroke="#1010a0" stroke-width="3.2"/><path d="M287 917.5 L295.5 923.5 L285.5 926Z" fill="#0a0a90"/>
<text x="270" y="883" font-size="8" fill="#2a8a2a" text-anchor="middle" font-family="Liberation Sans">Y</text>
<text x="289.5" y="898" font-size="8" fill="#e02020" text-anchor="middle" font-family="Liberation Sans">X</text>
<text x="300.5" y="927" font-size="8" fill="#1a1ae0" text-anchor="middle" font-family="Liberation Sans">Z</text>
</svg>
<div class="a" style="left:87px;top:741px;width:325px;height:68px;background:#f7f7f7;border:1px solid #b5b5b5;box-shadow:1px 1px 2px rgba(0,0,0,0.12)"></div>
<svg class="a" style="left:87px;top:741px" width="325" height="67" viewBox="87 741 325 67"><path d="M96 754 L101 754 L102.5 756 L111 756 L111 769 L96 769Z" fill="#e8e8e8" stroke="#333"/><path d="M96 769 L99.5 761 L115 761 L111 769Z" fill="#f8f8f8" stroke="#333"/><path d="M103 751 Q110 751 110 757" stroke="#1f6fa8" stroke-width="2" fill="none"/><path d="M106.5 756 L110 761 L113.5 756Z" fill="#1f6fa8"/><path d="M123 759 L129 759 L126 762Z" fill="#333"/><path d="M141 762 L153 751 Q157 751 158 755 L147 767Z" fill="#9a9a9a" stroke="#333"/><path d="M150 763 L154 769 L158 763Z" fill="#2e9a3c"/><path d="M171 753 L181 753 L181 756 L186 756 L186 769 L171 769Z" fill="#ececec" stroke="#222" stroke-width="1"/><path d="M173 762 L176 762 L176 758 L180 758 L180 762 L183 762 L183 767 L173 767Z" fill="#f3d22e" stroke="#3a3000" stroke-width="0.8"/><path d="M181 751 Q186 751 186 757" stroke="#2a77b0" stroke-width="2" fill="none"/><path d="M183 755.5 L186 760 L189 755.5Z" fill="#2a77b0"/><rect x="184" y="763" width="3" height="6" fill="#ddd" stroke="#333" stroke-width="0.6"/><path d="M200 758 L203 757 L203 754 L208 752 L212 754 L212 765 L208 768 L200 763Z" fill="#f6e7a6" stroke="#b9a66a" stroke-width="0.8"/><path d="M207 755 L211 753 L216 755 L216 761 L212 763 L207 761Z" fill="#69b7e0" stroke="#0e3d5e" stroke-width="1"/><path d="M215 759 L218 762 L208.5 771 L205.5 768Z" fill="#f3cf3a" stroke="#333" stroke-width="0.8"/><path d="M215 759 L218 762 L219.5 760.5 L216.5 757.5Z" fill="#d9342b"/><path d="M205.5 768 L208.5 771 L204.5 772Z" fill="#333"/><path d="M229 755 Q238 749 247 757 Q238 766 229 759Z" fill="none" stroke="#ccc"/><path d="M230 751 L246 768" stroke="#bbb" stroke-width="1.2"/><rect x="251" y="743" width="35" height="34" fill="#cfcfcf"/><rect x="252.5" y="744.5" width="32" height="31" fill="#fbfbfb" stroke="#a5a5a5" stroke-width="1"/><path d="M261 756 L264 755 L264 752 L268 750.5 L272 752 L272 757 L276 759 L276 766 L270.5 769 L261 764Z" fill="#f7eecb" stroke="#e2d6a8" stroke-width="0.8"/><path d="M270.5 762 L276 759 M270.5 762 L270.5 769 M264 752 L268 753.5 L272 752 M268 753.5 L268 760" fill="none" stroke="#e2d6a8" stroke-width="0.7"/><path d="M260 764 Q265.5 758.5 271 764 Q265.5 769.5 260 764Z" fill="#fff" stroke="#222" stroke-width="1.1"/><circle cx="265.5" cy="764" r="2.2" fill="#222"/><path d="M293.5 753 L293.5 767 M290.5 763.5 L293.5 768 L296.5 763.5" stroke="#111" stroke-width="1.4" fill="none"/><path d="M298 753 L302 751 L307 753 L307 759 L302 761 L298 759Z" fill="#3c8fc7" stroke="#0e3d5e" stroke-width="0.8"/><path d="M298 753 L302 755 L307 753 M302 755 L302 761" fill="none" stroke="#0e3d5e" stroke-width="0.6"/><path d="M298 763 L302 761 L307 763 L307 769 L302 771 L298 769Z" fill="#fafafa" stroke="#aaa" stroke-width="0.8"/><g transform="translate(329.5 760) rotate(-38) translate(-4 -10)"><path d="M5.6 5 L5.6 15 A1.6 1.6 0 0 1 2.4 15 L2.4 3.5 A2.8 2.8 0 0 1 8 3.5 L8 16.5 A4 4 0 0 1 0 16.5 L0 5" fill="none" stroke="#222" stroke-width="1.15"/></g><g transform="translate(361 758) rotate(-38) translate(-4 -10)"><path d="M5.6 5 L5.6 15 A1.6 1.6 0 0 1 2.4 15 L2.4 3.5 A2.8 2.8 0 0 1 8 3.5 L8 16.5 A4 4 0 0 1 0 16.5 L0 5" fill="none" stroke="#222" stroke-width="1.15"/></g><path d="M349 765 Q355 758.5 361 765 Q355 771 349 765Z" fill="#fff" stroke="#222" stroke-width="1.1"/><circle cx="355" cy="765" r="2.2" fill="#222"/><rect x="380" y="752" width="17" height="17" fill="#fff" stroke="#1f4f70"/><rect x="380" y="752" width="17" height="3" fill="#2c77b0"/><rect x="383" y="757.5" width="3" height="2.5" fill="#2c77b0"/><rect x="383" y="761.5" width="3" height="2.5" fill="#2c77b0"/><rect x="383" y="765.5" width="3" height="2.5" fill="#2c77b0"/><path d="M388 759 L395 759 M388 763 L395 763 M388 767 L395 767" stroke="#333"/><circle cx="108" cy="785" r="5.5" fill="#eef6fa" stroke="#222" stroke-width="1.1"/><path d="M105.5 784 L110.5 784 M105.5 786.5 L110.5 786.5" stroke="#222"/><path d="M104 789.5 L97.5 796" stroke="#2c77b0" stroke-width="2.4"/><rect x="126" y="781" width="17" height="17" fill="#f0f0f0" stroke="#333"/><rect x="126" y="781" width="17" height="3" fill="#2c77b0"/><use href="#part" x="128.5" y="785" width="12" height="12"/><circle cx="163" cy="787" r="8" fill="#35a83a"/><path d="M163 787 L163 779 A8 8 0 0 1 171 787Z" fill="#d23a30"/><path d="M163 787 L155 787 A8 8 0 0 1 163 779Z" fill="#2f7fc8"/><path d="M155 787 L163 787 L163 795 A8 8 0 0 1 155 787Z" fill="#35a83a"/><ellipse cx="160" cy="782.5" rx="2.5" ry="1.5" fill="#fff" opacity="0.55"/><path d="M174 787 L165 797 L162 798.5 L162.5 795.5 L171.5 785.5Z" fill="#f2c94c" stroke="#333" stroke-width="0.8"/><path d="M171.5 785.5 L174 787 L175 785.8 L172.6 784.2Z" fill="#d9342b"/><path d="M183 788 L189 788 L186 791Z" fill="#333"/></svg>
<div class="a" style="left:275px;top:792px;width:73px;height:21px;background:#fafafa;border:1px solid #767676;box-shadow:2px 2px 2px rgba(0,0,0,0.18);font-size:12px;line-height:19px;text-align:center;color:#333;white-space:nowrap">更改透明度</div>
<div class="a" style="left:246px;top:738px;width:45px;height:45px;border:4.5px solid #ee4347;border-radius:6px;box-shadow:0 0 2px rgba(0,0,0,0.25)"></div>
<div class="a" style="left:22px;top:803px;width:203px;height:34px;border:4px solid #ee4347;border-radius:6px;box-shadow:0 0 2px rgba(0,0,0,0.25)"></div>
<svg class="a" style="left:0;top:0" width="1184" height="1038" viewBox="0 0 1184 1038">
<path d="M299.6 567.4 L275 700" stroke="#f24444" stroke-width="9" stroke-linecap="round"/>
<path d="M260 696.5 L289 701.6 L269 727.3Z" fill="#f24444"/>
</svg>
<div class="a" style="left:229px;top:526px;width:9px;height:34px;background:#f4f4f4;border:1px solid #b8b8b8;border-left:none"></div>
<div class="a" style="left:230px;top:540px;width:6px;height:6px;border-radius:3px;border:1px solid #999"></div>
<svg class="a" style="left:0;top:0" width="1184" height="1038" viewBox="0 0 1184 1038"><g transform="translate(251,154) rotate(-29)"><text x="0" y="0" font-family="Liberation Sans" font-size="37" letter-spacing="0.5" fill="none" stroke="rgba(0,0,0,0.085)" stroke-width="1.5" transform="translate(0.7,0.9)">Senshow</text><text x="0" y="0" font-family="Liberation Sans" font-size="37" letter-spacing="0.5" fill="none" stroke="rgba(255,255,255,0.16)" stroke-width="1.6">Senshow</text><text x="4" y="37" font-family="Liberation Sans" font-size="28" letter-spacing="1.5" fill="none" stroke="rgba(0,0,0,0.08)" stroke-width="1.4" transform="translate(0.7,0.9)">新思诺软件</text><text x="4" y="37" font-family="Liberation Sans" font-size="28" letter-spacing="1.5" fill="none" stroke="rgba(255,255,255,0.14)" stroke-width="1.3">新思诺软件</text></g><g transform="translate(188,565) rotate(-29)"><text x="0" y="0" font-family="Liberation Sans" font-size="37" letter-spacing="0.5" fill="none" stroke="rgba(0,0,0,0.085)" stroke-width="1.5" transform="translate(0.7,0.9)">Senshow</text><text x="0" y="0" font-family="Liberation Sans" font-size="37" letter-spacing="0.5" fill="none" stroke="rgba(255,255,255,0.16)" stroke-width="1.6">Senshow</text><text x="4" y="37" font-family="Liberation Sans" font-size="28" letter-spacing="1.5" fill="none" stroke="rgba(0,0,0,0.08)" stroke-width="1.4" transform="translate(0.7,0.9)">新思诺软件</text><text x="4" y="37" font-family="Liberation Sans" font-size="28" letter-spacing="1.5" fill="none" stroke="rgba(255,255,255,0.14)" stroke-width="1.3">新思诺软件</text></g><g transform="translate(176,952) rotate(-29)"><text x="0" y="0" font-family="Liberation Sans" font-size="37" letter-spacing="0.5" fill="none" stroke="rgba(0,0,0,0.085)" stroke-width="1.5" transform="translate(0.7,0.9)">Senshow</text><text x="0" y="0" font-family="Liberation Sans" font-size="37" letter-spacing="0.5" fill="none" stroke="rgba(255,255,255,0.16)" stroke-width="1.6">Senshow</text><text x="4" y="37" font-family="Liberation Sans" font-size="28" letter-spacing="1.5" fill="none" stroke="rgba(0,0,0,0.08)" stroke-width="1.4" transform="translate(0.7,0.9)">新思诺软件</text><text x="4" y="37" font-family="Liberation Sans" font-size="28" letter-spacing="1.5" fill="none" stroke="rgba(255,255,255,0.14)" stroke-width="1.3">新思诺软件</text></g><g transform="translate(881,151) rotate(-29)"><text x="0" y="0" font-family="Liberation Sans" font-size="37" letter-spacing="0.5" fill="none" stroke="rgba(0,0,0,0.085)" stroke-width="1.5" transform="translate(0.7,0.9)">Senshow</text><text x="0" y="0" font-family="Liberation Sans" font-size="37" letter-spacing="0.5" fill="none" stroke="rgba(255,255,255,0.16)" stroke-width="1.6">Senshow</text><text x="4" y="37" font-family="Liberation Sans" font-size="28" letter-spacing="1.5" fill="none" stroke="rgba(0,0,0,0.08)" stroke-width="1.4" transform="translate(0.7,0.9)">新思诺软件</text><text x="4" y="37" font-family="Liberation Sans" font-size="28" letter-spacing="1.5" fill="none" stroke="rgba(255,255,255,0.14)" stroke-width="1.3">新思诺软件</text></g><g transform="translate(552,345) rotate(-29)"><text x="0" y="0" font-family="Liberation Sans" font-size="37" letter-spacing="0.5" fill="none" stroke="rgba(0,0,0,0.085)" stroke-width="1.5" transform="translate(0.7,0.9)">Senshow</text><text x="0" y="0" font-family="Liberation Sans" font-size="37" letter-spacing="0.5" fill="none" stroke="rgba(255,255,255,0.16)" stroke-width="1.6">Senshow</text><text x="4" y="37" font-family="Liberation Sans" font-size="28" letter-spacing="1.5" fill="none" stroke="rgba(0,0,0,0.08)" stroke-width="1.4" transform="translate(0.7,0.9)">新思诺软件</text><text x="4" y="37" font-family="Liberation Sans" font-size="28" letter-spacing="1.5" fill="none" stroke="rgba(255,255,255,0.14)" stroke-width="1.3">新思诺软件</text></g><g transform="translate(534,726) rotate(-29)"><text x="0" y="0" font-family="Liberation Sans" font-size="37" letter-spacing="0.5" fill="none" stroke="rgba(0,0,0,0.085)" stroke-width="1.5" transform="translate(0.7,0.9)">Senshow</text><text x="0" y="0" font-family="Liberation Sans" font-size="37" letter-spacing="0.5" fill="none" stroke="rgba(255,255,255,0.16)" stroke-width="1.6">Senshow</text><text x="4" y="37" font-family="Liberation Sans" font-size="28" letter-spacing="1.5" fill="none" stroke="rgba(0,0,0,0.08)" stroke-width="1.4" transform="translate(0.7,0.9)">新思诺软件</text><text x="4" y="37" font-family="Liberation Sans" font-size="28" letter-spacing="1.5" fill="none" stroke="rgba(255,255,255,0.14)" stroke-width="1.3">新思诺软件</text></g><g transform="translate(821,569) rotate(-29)"><text x="0" y="0" font-family="Liberation Sans" font-size="37" letter-spacing="0.5" fill="none" stroke="rgba(0,0,0,0.085)" stroke-width="1.5" transform="translate(0.7,0.9)">Senshow</text><text x="0" y="0" font-family="Liberation Sans" font-size="37" letter-spacing="0.5" fill="none" stroke="rgba(255,255,255,0.16)" stroke-width="1.6">Senshow</text><text x="4" y="37" font-family="Liberation Sans" font-size="28" letter-spacing="1.5" fill="none" stroke="rgba(0,0,0,0.08)" stroke-width="1.4" transform="translate(0.7,0.9)">新思诺软件</text><text x="4" y="37" font-family="Liberation Sans" font-size="28" letter-spacing="1.5" fill="none" stroke="rgba(255,255,255,0.14)" stroke-width="1.3">新思诺软件</text></g><g transform="translate(800,948) rotate(-29)"><text x="0" y="0" font-family="Liberation Sans" font-size="37" letter-spacing="0.5" fill="none" stroke="rgba(0,0,0,0.085)" stroke-width="1.5" transform="translate(0.7,0.9)">Senshow</text><text x="0" y="0" font-family="Liberation Sans" font-size="37" letter-spacing="0.5" fill="none" stroke="rgba(255,255,255,0.16)" stroke-width="1.6">Senshow</text><text x="4" y="37" font-family="Liberation Sans" font-size="28" letter-spacing="1.5" fill="none" stroke="rgba(0,0,0,0.08)" stroke-width="1.4" transform="translate(0.7,0.9)">新思诺软件</text><text x="4" y="37" font-family="Liberation Sans" font-size="28" letter-spacing="1.5" fill="none" stroke="rgba(255,255,255,0.14)" stroke-width="1.3">新思诺软件</text></g><g transform="translate(1162,735) rotate(-29)"><text x="0" y="0" font-family="Liberation Sans" font-size="37" letter-spacing="0.5" fill="none" stroke="rgba(0,0,0,0.085)" stroke-width="1.5" transform="translate(0.7,0.9)">Senshow</text><text x="0" y="0" font-family="Liberation Sans" font-size="37" letter-spacing="0.5" fill="none" stroke="rgba(255,255,255,0.16)" stroke-width="1.6">Senshow</text><text x="4" y="37" font-family="Liberation Sans" font-size="28" letter-spacing="1.5" fill="none" stroke="rgba(0,0,0,0.08)" stroke-width="1.4" transform="translate(0.7,0.9)">新思诺软件</text><text x="4" y="37" font-family="Liberation Sans" font-size="28" letter-spacing="1.5" fill="none" stroke="rgba(255,255,255,0.14)" stroke-width="1.3">新思诺软件</text></g><g transform="translate(1172,345) rotate(-29)"><text x="0" y="0" font-family="Liberation Sans" font-size="37" letter-spacing="0.5" fill="none" stroke="rgba(0,0,0,0.085)" stroke-width="1.5" transform="translate(0.7,0.9)">Senshow</text><text x="0" y="0" font-family="Liberation Sans" font-size="37" letter-spacing="0.5" fill="none" stroke="rgba(255,255,255,0.16)" stroke-width="1.6">Senshow</text><text x="4" y="37" font-family="Liberation Sans" font-size="28" letter-spacing="1.5" fill="none" stroke="rgba(0,0,0,0.08)" stroke-width="1.4" transform="translate(0.7,0.9)">新思诺软件</text><text x="4" y="37" font-family="Liberation Sans" font-size="28" letter-spacing="1.5" fill="none" stroke="rgba(255,255,255,0.14)" stroke-width="1.3">新思诺软件</text></g><g transform="translate(514,1106) rotate(-29)"><text x="0" y="0" font-family="Liberation Sans" font-size="37" letter-spacing="0.5" fill="none" stroke="rgba(0,0,0,0.085)" stroke-width="1.5" transform="translate(0.7,0.9)">Senshow</text><text x="0" y="0" font-family="Liberation Sans" font-size="37" letter-spacing="0.5" fill="none" stroke="rgba(255,255,255,0.16)" stroke-width="1.6">Senshow</text><text x="4" y="37" font-family="Liberation Sans" font-size="28" letter-spacing="1.5" fill="none" stroke="rgba(0,0,0,0.08)" stroke-width="1.4" transform="translate(0.7,0.9)">新思诺软件</text><text x="4" y="37" font-family="Liberation Sans" font-size="28" letter-spacing="1.5" fill="none" stroke="rgba(255,255,255,0.14)" stroke-width="1.3">新思诺软件</text></g><g transform="translate(1135,1105) rotate(-29)"><text x="0" y="0" font-family="Liberation Sans" font-size="37" letter-spacing="0.5" fill="none" stroke="rgba(0,0,0,0.085)" stroke-width="1.5" transform="translate(0.7,0.9)">Senshow</text><text x="0" y="0" font-family="Liberation Sans" font-size="37" letter-spacing="0.5" fill="none" stroke="rgba(255,255,255,0.16)" stroke-width="1.6">Senshow</text><text x="4" y="37" font-family="Liberation Sans" font-size="28" letter-spacing="1.5" fill="none" stroke="rgba(0,0,0,0.08)" stroke-width="1.4" transform="translate(0.7,0.9)">新思诺软件</text><text x="4" y="37" font-family="Liberation Sans" font-size="28" letter-spacing="1.5" fill="none" stroke="rgba(255,255,255,0.14)" stroke-width="1.3">新思诺软件</text></g></svg>
<div class="a" style="left:456px;top:0;width:75px;height:1038px;background:linear-gradient(90deg,rgba(255,255,255,0.12) 0%,rgba(255,255,255,0.5) 12%,rgba(255,255,255,0.9) 22%,#fff 29%,#fff 73%,rgba(255,255,255,0.85) 80%,rgba(255,255,255,0.45) 90%,rgba(255,255,255,0.15) 98%,rgba(255,255,255,0) 100%)"></div>
</body></html>
